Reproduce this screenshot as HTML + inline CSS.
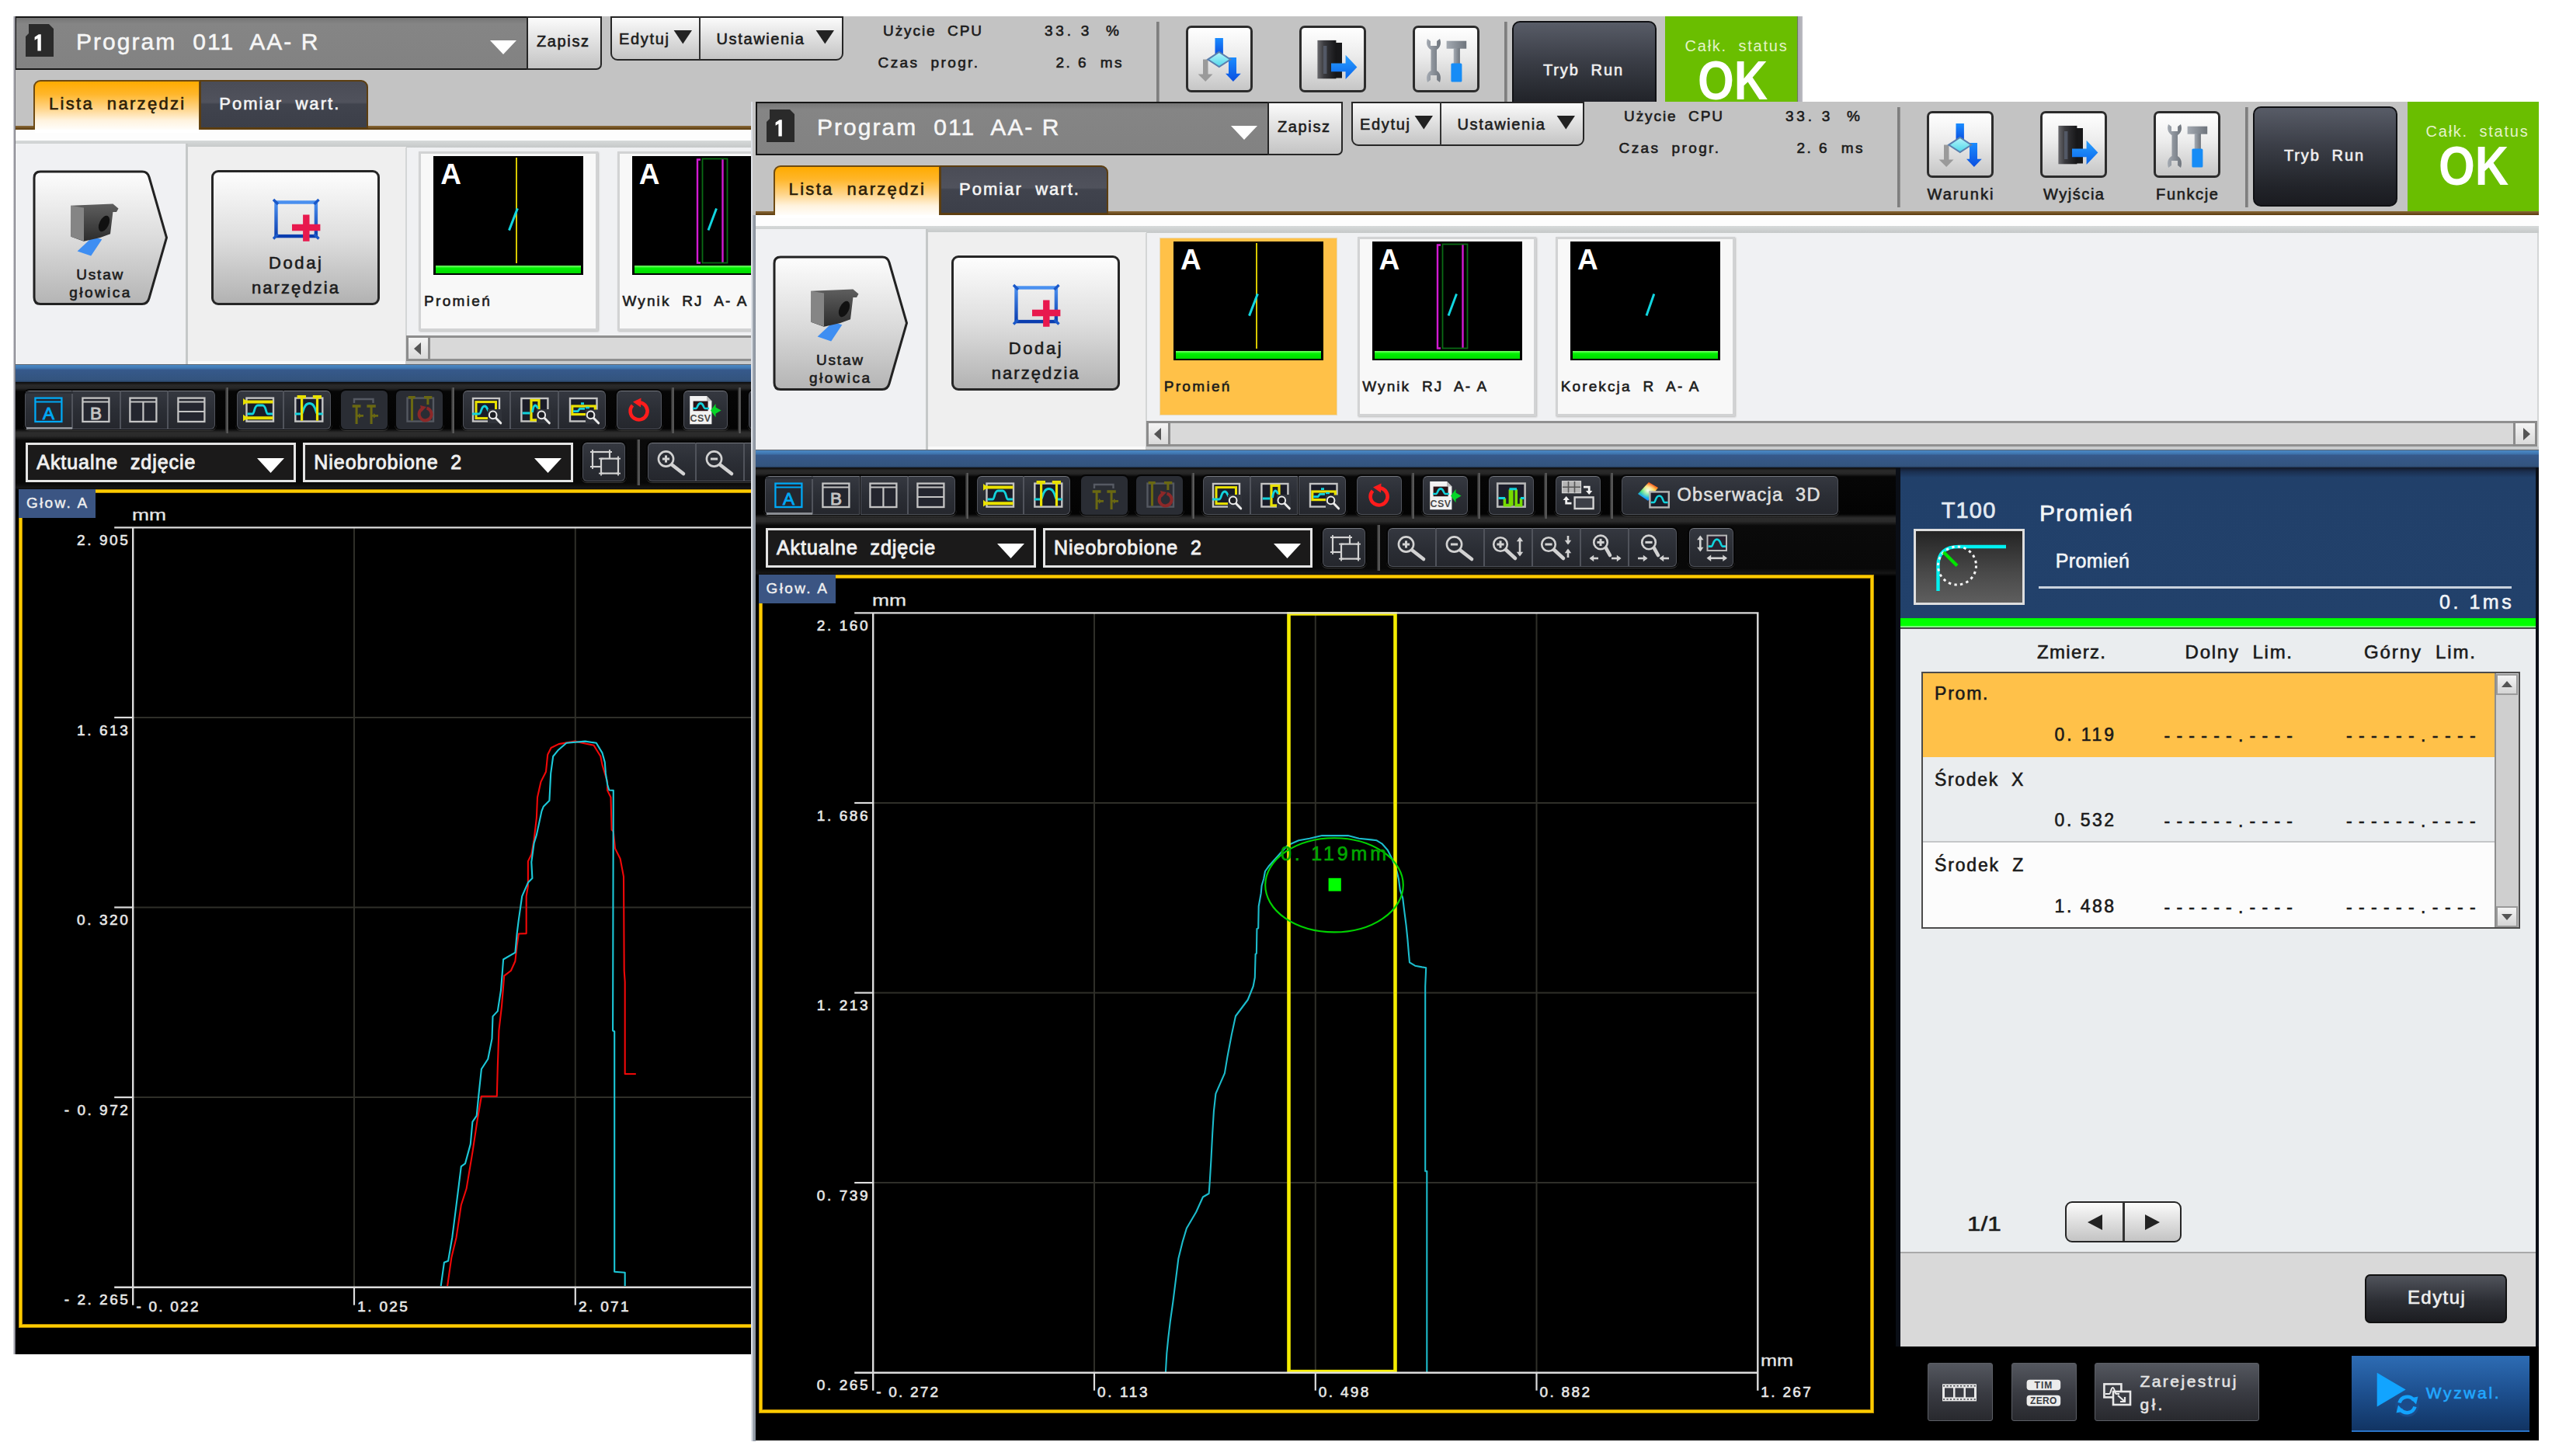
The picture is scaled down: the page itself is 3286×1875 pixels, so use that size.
<!DOCTYPE html>
<html><head><meta charset="utf-8"><title>Profile UI</title>
<style>
html,body{margin:0;padding:0;background:#fff;}
body{width:3286px;height:1875px;position:relative;overflow:hidden;font-family:"Liberation Sans",sans-serif;}
.win{position:absolute;width:2296px;height:1724px;background:#c3c3c3;overflow:hidden;}
.win div,.win svg{position:absolute;box-sizing:border-box;}
.t{white-space:pre;}
.lb{background:linear-gradient(#fbfbfb,#dcdcdc 55%,#c4c4c4);border:2.5px solid #262626;}
.db{background:linear-gradient(#353840,#2b2e35 50%,#25272d);border:1px solid #50535b;border-top:1.5px solid #74777e;border-radius:4px;}
.dbd{background:#2a2d34;border-radius:7px;}
.vd{width:4px;background:linear-gradient(90deg,#262626,#484848 45%,#707070 75%,#2c2c2c);}

</style></head><body>
<div class="win" style="left:20.3px;top:21px;height:1722.6px;"><div style="left:-1.3px;top:0;width:2296px;height:141px;"><div style="left:0.0px;top:0.0px;width:661.0px;height:68.5px;background:linear-gradient(#767676,#858585 12%,#828282);border:2.5px solid #161616;"></div><svg style="left:12.0px;top:8.0px;overflow:visible;" width="42" height="48" viewBox="0 0 42 48"><path d="M6,2 H32 L38,8 V44 H2 V18 L6,14 Z" fill="#2a2a2a"/><path d="M21.8,15.3 V36.6 H17.4 V20.6 L13.6,22.8 V18.8 L18.8,15.3 Z" fill="#fff"/></svg><div class="t" style="font-size:30px;line-height:36.0px;top:14.5px;color:#f6f6f6;letter-spacing:2.05px;left:79.0px;-webkit-text-stroke:0.5px #f6f6f6;">Program  011  AA- R</div><svg style="left:610.0px;top:30.0px;overflow:visible;" width="40" height="22" viewBox="0 0 40 22"><polygon points="2,1 36,1 19,19" fill="#fff"/></svg><div class="lb" style="left:659.0px;top:0.0px;width:96.5px;height:69.0px;border-radius:0 0 7px 0;"></div><div class="t" style="font-size:20px;line-height:24.0px;top:20.0px;color:#1c1c1c;letter-spacing:1.62px;left:672.0px;-webkit-text-stroke:0.6px #1c1c1c;">Zapisz</div><div class="lb" style="left:767.0px;top:0.0px;width:300.0px;height:57.0px;border-radius:0 0 9px 9px;"></div><div style="left:880.5px;top:0.0px;width:2.5px;height:56.0px;background:#333;"></div><div class="t" style="font-size:20px;line-height:24.0px;top:16.5px;color:#1c1c1c;letter-spacing:1.68px;left:778.0px;-webkit-text-stroke:0.6px #1c1c1c;">Edytuj</div><div class="t" style="font-size:20px;line-height:24.0px;top:16.5px;color:#1c1c1c;letter-spacing:1.63px;left:903.5px;-webkit-text-stroke:0.6px #1c1c1c;">Ustawienia</div><svg style="left:846.0px;top:16.0px;overflow:visible;" width="30" height="22" viewBox="0 0 30 22"><polygon points="2.6,2 26,2 14.3,19.4" fill="#222"/></svg><svg style="left:1029.4px;top:16.0px;overflow:visible;" width="30" height="22" viewBox="0 0 30 22"><polygon points="2.6,2 26,2 14.3,19.4" fill="#222"/></svg><div class="t" style="font-size:19px;line-height:22.8px;top:7.6px;color:#1c1c1c;letter-spacing:1.93px;left:1118.0px;-webkit-text-stroke:0.6px #1c1c1c;">Użycie  CPU</div><div class="t" style="font-size:19px;line-height:22.8px;top:7.6px;color:#1c1c1c;letter-spacing:3.75px;left:1326.0px;-webkit-text-stroke:0.6px #1c1c1c;">33. 3  %</div><div class="t" style="font-size:19px;line-height:22.8px;top:48.6px;color:#1c1c1c;letter-spacing:2.36px;left:1111.6px;-webkit-text-stroke:0.6px #1c1c1c;">Czas  progr.</div><div class="t" style="font-size:19px;line-height:22.8px;top:48.6px;color:#1c1c1c;letter-spacing:2.49px;left:1340.5px;-webkit-text-stroke:0.6px #1c1c1c;">2. 6  ms</div><div style="left:1470.0px;top:7.0px;width:4.5px;height:129.0px;background:linear-gradient(90deg,#7e7e7e 60%,#d8d8d8);"></div><div class="lb" style="left:1508.0px;top:12.0px;width:86.0px;height:86.0px;border-radius:7px;border-width:3px;border-color:#2c2c2c;background:linear-gradient(#ffffff,#ececec 45%,#c6c6c6);"></div><svg style="left:1508.0px;top:12.0px;overflow:visible;" width="86" height="86" viewBox="0 0 86 86"><defs><linearGradient id="wb" x1="0" y1="0" x2="0" y2="1"><stop offset="0" stop-color="#1a8cff"/><stop offset="1" stop-color="#0a4ee0"/></linearGradient><linearGradient id="wc" x1="0" y1="0" x2="0" y2="1"><stop offset="0" stop-color="#b6f6fb"/><stop offset="1" stop-color="#4fd6ea"/></linearGradient></defs><rect x="37.5" y="16" width="10.4" height="22" fill="url(#wb)"/><path d="M28.5,43.6 H22 V62.5 H15.6 L25.2,72 L34.5,62.5 H28.5 Z" fill="#9a9a9a"/><path d="M55,41 H65 V61.7 H70.8 L60.9,72 L51,61.7 H55 Z" fill="url(#wb)"/><polygon points="42.8,34 57.4,43.6 42.8,53 28.2,43.6" fill="url(#wc)" stroke="#5a7fae" stroke-width="2"/></svg><div class="t" style="font-size:20px;line-height:24.0px;top:106.5px;color:#1c1c1c;letter-spacing:2.07px;left:1251.0px;width:600px;text-align:center;text-indent:2.07px;-webkit-text-stroke:0.6px #1c1c1c;">Warunki</div><div class="lb" style="left:1654.0px;top:12.0px;width:86.0px;height:86.0px;border-radius:7px;border-width:3px;border-color:#2c2c2c;background:linear-gradient(#ffffff,#ececec 45%,#c6c6c6);"></div><svg style="left:1654.0px;top:12.0px;overflow:visible;" width="86" height="86" viewBox="0 0 86 86"><defs><linearGradient id="sv" x1="0" y1="0" x2="1" y2="0"><stop offset="0" stop-color="#6a6a6e"/><stop offset="0.35" stop-color="#3a3a3e"/><stop offset="1" stop-color="#161618"/></linearGradient><linearGradient id="ab" x1="0" y1="0" x2="0" y2="1"><stop offset="0" stop-color="#2aa0ff"/><stop offset="1" stop-color="#0864ec"/></linearGradient></defs><rect x="46" y="22" width="9" height="45.5" fill="#18181a"/><rect x="23.4" y="18.9" width="24" height="49.4" fill="url(#sv)"/><rect x="31" y="26" width="4.4" height="36" fill="#5a6270" opacity="0.8"/><path d="M41,48.5 H59.6 V37.8 L74.4,53.5 L59.6,69 V59.2 H41 Z" fill="url(#ab)"/></svg><div class="t" style="font-size:20px;line-height:24.0px;top:106.5px;color:#1c1c1c;letter-spacing:1.55px;left:1397.0px;width:600px;text-align:center;text-indent:1.55px;-webkit-text-stroke:0.6px #1c1c1c;">Wyjścia</div><div class="lb" style="left:1800.0px;top:12.0px;width:86.0px;height:86.0px;border-radius:7px;border-width:3px;border-color:#2c2c2c;background:linear-gradient(#ffffff,#ececec 45%,#c6c6c6);"></div><svg style="left:1800.0px;top:12.0px;overflow:visible;" width="86" height="86" viewBox="0 0 86 86"><defs><linearGradient id="mt" x1="0" y1="0" x2="1" y2="0"><stop offset="0" stop-color="#a4aab2"/><stop offset="1" stop-color="#6e747c"/></linearGradient></defs><path d="M19,17 C17,22 18,28 23.5,31 V58 C18,61 17,67 19,73 L23,70 V64 H31 V70 L35,73 C37,67 36,61 31,58 V31 C36,28 37,22 35,17 L31,20 V26 H23 V20 Z" fill="url(#mt)"/><rect x="43.6" y="19.7" width="25.6" height="10" fill="url(#mt)"/><rect x="52.7" y="29" width="8.2" height="21" fill="url(#mt)"/><rect x="49.4" y="48.5" width="14" height="24" rx="1.5" fill="#168cf6"/></svg><div class="t" style="font-size:20px;line-height:24.0px;top:106.5px;color:#1c1c1c;letter-spacing:1.66px;left:1543.0px;width:600px;text-align:center;text-indent:1.66px;-webkit-text-stroke:0.6px #1c1c1c;">Funkcje</div><div style="left:1918.0px;top:6.5px;width:4.5px;height:129.0px;background:linear-gradient(90deg,#7e7e7e 60%,#d8d8d8);"></div><div style="left:1928.0px;top:6.0px;width:186.0px;height:128.5px;background:linear-gradient(#585c67,#3a3d46 40%,#22242a 80%,#1a1b20);border:2px solid #101114;border-radius:10px;"></div><div class="t" style="font-size:20px;line-height:24.0px;top:56.5px;color:#f0f0f0;letter-spacing:1.87px;left:1968.0px;-webkit-text-stroke:0.6px #f0f0f0;">Tryb  Run</div><div style="left:2124.5px;top:0.0px;width:171.5px;height:141.5px;background:#6abe00;"></div><div class="t" style="font-size:20px;line-height:24.0px;top:25.5px;color:#e4f3c8;letter-spacing:1.75px;left:2150.6px;">Całk.  status</div><div class="t" style="font-size:70px;line-height:84.0px;top:40.5px;color:#fff;letter-spacing:0.00px;font-weight:bold;left:2166.7px;transform:scaleX(0.860);transform-origin:left center;">OK</div></div><div style="left:0.0px;top:141.0px;width:2296.0px;height:4.5px;background:linear-gradient(#8a6a3a,#5a3a0c);"></div><div style="left:22.5px;top:82.4px;width:215.5px;height:65.6px;background:linear-gradient(#ffab00,#ffb62a 25%,#ffd58a 55%,#fff3de 78%,#fff);border:2.5px solid #6e4a12;border-bottom:0;border-radius:9px 0 0 0;"></div><div style="left:237.0px;top:82.4px;width:216.5px;height:62.6px;background:linear-gradient(#4a4c56,#50525c 45%,#40434d 50%,#3c3f49);border:2.5px solid #5c3e10;border-radius:0 9px 0 0;"></div><div class="t" style="font-size:22px;line-height:26.4px;top:100.3px;color:#2c1e08;letter-spacing:2.32px;left:42.6px;-webkit-text-stroke:0.6px #2c1e08;">Lista  narzędzi</div><div class="t" style="font-size:22px;line-height:26.4px;top:100.3px;color:#f4f4f4;letter-spacing:2.03px;left:262.0px;-webkit-text-stroke:0.6px #f4f4f4;">Pomiar  wart.</div><div style="left:0.0px;top:145.5px;width:2296.0px;height:15.0px;background:#fdfdfd;"></div><div style="left:24.5px;top:145.5px;width:211.5px;height:4.0px;background:#fff;"></div><div style="left:0.0px;top:160.0px;width:2296.0px;height:10.0px;background:linear-gradient(#d6d9d9,#c4c7c7);"></div><div style="left:0.0px;top:164.0px;width:219.0px;height:284.5px;background:#f0f1f3;"></div><div style="left:218.6px;top:164.0px;width:3.6px;height:284.5px;background:#c5c8c8;"></div><div style="left:222.0px;top:168.0px;width:280.5px;height:280.0px;background:#efefef;border-bottom:4px solid #f9f9f9;"></div><div style="left:502.0px;top:169.0px;width:1794.0px;height:279.0px;background:#f0f1f3;border-left:2px solid #d4d6d6;border-right:2px solid #d4d6d6;"></div><svg style="left:22.0px;top:197.5px;overflow:visible;" width="200" height="176" viewBox="0 0 200 176"><defs><linearGradient id="lg1" x1="0" y1="0" x2="0" y2="1"><stop offset="0" stop-color="#fdfdfd"/><stop offset="0.5" stop-color="#dcdcdc"/><stop offset="1" stop-color="#b4b4b4"/></linearGradient></defs><path d="M10,2 H141 Q148,2 150,9 L172.5,87 L150,165 Q148,172.5 141,172.5 H10 Q2,172.5 2,164 V10 Q2,2 10,2 Z" fill="url(#lg1)" stroke="#222" stroke-width="3"/></svg><svg style="left:22.0px;top:197.5px;overflow:visible;" width="200" height="176" viewBox="0 0 200 176"><defs><linearGradient id="hb" x1="0" y1="0" x2="0" y2="1"><stop offset="0" stop-color="#5e5e5e"/><stop offset="1" stop-color="#2c2c2c"/></linearGradient></defs><polygon points="77.6,85.8 89.3,89.3 75.2,110.5 57.6,104.6" fill="#3e8ef2"/><polygon points="49.4,45.8 103.4,43.5 110.5,49.4 108,54 103.4,54 100,82.3 87,87 65.8,91.7 49.4,85.8" fill="url(#hb)"/><polygon points="49.4,45.8 66,48.5 66,91.5 49.4,85.8" fill="#858585"/><ellipse cx="92" cy="69" rx="6" ry="11" transform="rotate(25 92 69)" fill="#111"/></svg><div class="t" style="font-size:19px;line-height:22.8px;top:322.2px;color:#1c1c1c;letter-spacing:1.80px;left:-192.0px;width:600px;text-align:center;text-indent:1.80px;-webkit-text-stroke:0.6px #1c1c1c;">Ustaw</div><div class="t" style="font-size:19px;line-height:22.8px;top:344.6px;color:#1c1c1c;letter-spacing:2.44px;left:-192.0px;width:600px;text-align:center;text-indent:2.44px;-webkit-text-stroke:0.6px #1c1c1c;">głowica</div><div class="lb" style="left:252.0px;top:198.4px;width:216.5px;height:174.0px;border-radius:9px;border-width:3px;background:linear-gradient(#fdfdfd,#dedede 50%,#b2b2b2);"></div><svg style="left:252.0px;top:198.4px;overflow:visible;" width="216.5" height="174" viewBox="0 0 216.5 174"><defs><linearGradient id="ar" x1="0" y1="0" x2="0" y2="1"><stop offset="0" stop-color="#4a90f0"/><stop offset="1" stop-color="#0a3cae"/></linearGradient></defs><rect x="83.5" y="41.5" width="51.4" height="43.6" fill="none" stroke="url(#ar)" stroke-width="4.4"/><path d="M80,38 L86,44 M138.5,38 L132.5,44 M80,88.5 L86,82.5 M138.5,88.5 L132.5,82.5" stroke="#1a58c8" stroke-width="3.4"/><path d="M122.3,57.6 V91.7 M104,74 H140.4" stroke="#e8194e" stroke-width="8.4"/></svg><div class="t" style="font-size:22px;line-height:26.4px;top:305.1px;color:#1c1c1c;letter-spacing:2.63px;left:59.7px;width:600px;text-align:center;text-indent:2.63px;-webkit-text-stroke:0.6px #1c1c1c;">Dodaj</div><div class="t" style="font-size:22px;line-height:26.4px;top:336.8px;color:#1c1c1c;letter-spacing:2.08px;left:59.7px;width:600px;text-align:center;text-indent:2.08px;-webkit-text-stroke:0.6px #1c1c1c;">narzędzia</div><div style="left:519.0px;top:174.0px;width:230.5px;height:230.5px;background:#f8f8f8;border:3px solid #d2d3d4;box-shadow:1px 1px 2px #bbb;"></div><div style="left:538.0px;top:179.6px;width:193.0px;height:153.0px;background:#000;"></div><div style="left:541.0px;top:320.6px;width:187.0px;height:10.5px;background:linear-gradient(#7dff6e,#00f000 35%,#00d800);"></div><svg style="left:538.0px;top:179.6px;overflow:visible;" width="193" height="153" viewBox="0 0 193 153"><line x1="107" y1="2" x2="107" y2="138" stroke="#d8c800" stroke-width="2"/><line x1="97.5" y1="95.6" x2="108.4" y2="67.4" stroke="#12d6e0" stroke-width="3"/></svg><div class="t" style="font-size:37px;line-height:44.4px;top:182.0px;color:#fff;letter-spacing:0.00px;font-weight:bold;left:547.0px;">A</div><div class="t" style="font-size:19px;line-height:22.8px;top:355.6px;color:#1c1c1c;letter-spacing:2.33px;left:525.7px;-webkit-text-stroke:0.6px #1c1c1c;">Promień</div><div style="left:774.5px;top:174.0px;width:230.5px;height:230.5px;background:#f8f8f8;border:3px solid #d2d3d4;box-shadow:1px 1px 2px #bbb;"></div><div style="left:793.5px;top:179.6px;width:193.0px;height:153.0px;background:#000;"></div><div style="left:796.5px;top:320.6px;width:187.0px;height:10.5px;background:linear-gradient(#7dff6e,#00f000 35%,#00d800);"></div><svg style="left:793.5px;top:179.6px;overflow:visible;" width="193" height="153" viewBox="0 0 193 153"><path d="M88,4.5 H84 V137.5 H88 M116.5,4 V138" fill="none" stroke="#d21ad2" stroke-width="2.4"/><rect x="90.5" y="3.5" width="32" height="134" fill="none" stroke="#0a6a14" stroke-width="1.8"/><line x1="98" y1="95.6" x2="108.5" y2="67.4" stroke="#12d6e0" stroke-width="3"/></svg><div class="t" style="font-size:37px;line-height:44.4px;top:182.0px;color:#fff;letter-spacing:0.00px;font-weight:bold;left:802.5px;">A</div><div class="t" style="font-size:19px;line-height:22.8px;top:355.6px;color:#1c1c1c;letter-spacing:2.09px;left:781.2px;-webkit-text-stroke:0.6px #1c1c1c;">Wynik  RJ  A- A</div><div style="left:1030.0px;top:174.0px;width:230.5px;height:230.5px;background:#f8f8f8;border:3px solid #d2d3d4;box-shadow:1px 1px 2px #bbb;"></div><div style="left:1049.0px;top:179.6px;width:193.0px;height:153.0px;background:#000;"></div><div style="left:1052.0px;top:320.6px;width:187.0px;height:10.5px;background:linear-gradient(#7dff6e,#00f000 35%,#00d800);"></div><svg style="left:1049.0px;top:179.6px;overflow:visible;" width="193" height="153" viewBox="0 0 193 153"><line x1="98" y1="95.6" x2="107.8" y2="67.4" stroke="#12d6e0" stroke-width="3"/></svg><div class="t" style="font-size:37px;line-height:44.4px;top:182.0px;color:#fff;letter-spacing:0.00px;font-weight:bold;left:1058.0px;">A</div><div class="t" style="font-size:19px;line-height:22.8px;top:355.6px;color:#1c1c1c;letter-spacing:2.13px;left:1036.7px;-webkit-text-stroke:0.6px #1c1c1c;">Korekcja  R  A- A</div><div style="left:503.0px;top:411.2px;width:1791.0px;height:32.5px;background:#d9d9d9;border:3px solid #909090;"></div><div style="left:503.0px;top:411.2px;width:31.0px;height:32.5px;background:linear-gradient(#f4f4f4,#dadada);border:3px solid #8c8c8c;"></div><div style="left:2263.0px;top:411.2px;width:31.0px;height:32.5px;background:linear-gradient(#f4f4f4,#dadada);border:3px solid #8c8c8c;"></div><svg style="left:503.0px;top:411.6px;overflow:visible;" width="31" height="32" viewBox="0 0 31 32"><polygon points="19,8 19,24 10,16" fill="#555"/></svg><svg style="left:2263.5px;top:411.6px;overflow:visible;" width="31" height="32" viewBox="0 0 31 32"><polygon points="12,8 12,24 21,16" fill="#555"/></svg><div style="left:502.0px;top:443.7px;width:1794.0px;height:4.5px;background:#c9cbcc;"></div><div style="left:0.0px;top:447.6px;width:2296.0px;height:24.0px;background:linear-gradient(#59636f 0 1px,#4c8ac6 1px,#4078b2 5px,#36598b 7.5px,#33547e 21px,#1c2c44);"></div><div style="left:0.0px;top:471.0px;width:1468.0px;height:142.0px;background:#000;"></div><div style="left:0.0px;top:471.0px;width:1468.0px;height:70.0px;background:linear-gradient(#0a0a0a,#2a2a2a 4px,#262626 8px,#060606 12px,#030303 60px,#2c2c2c 65px,#2a2a2a);"></div><div style="left:0.0px;top:541.0px;width:1468.0px;height:72.0px;background:linear-gradient(#262626,#0a0a0a 5px,#080808 60px,#161616 66px,#000 70px);"></div><div style="left:10.0px;top:480.0px;width:249.0px;height:54.0px;background:#050505;border-radius:8px;border-bottom:1px solid #3a3a3a;"></div><div class="db" style="left:12.0px;top:482.0px;width:61.2px;height:50.0px;border-radius:6px 0 0 6px;"></div><svg style="left:20.6px;top:487.0px;overflow:visible;" width="44" height="40" viewBox="0 0 44 40"><rect x="4.4" y="4.6" width="34" height="30.4" fill="#24262f" stroke="#00a8f4" stroke-width="2.3"/><line x1="4.4" y1="9.6" x2="38.4" y2="9.6" stroke="#00a8f4" stroke-width="2"/><text x="21.5" y="31.6" font-family="Liberation Sans" font-size="22.5" text-anchor="middle" fill="#00a8f4" stroke="#00a8f4" stroke-width="0.9">A</text></svg><div class="db" style="left:73.2px;top:482.0px;width:61.2px;height:50.0px;border-radius:0;"></div><svg style="left:81.9px;top:487.0px;overflow:visible;" width="44" height="40" viewBox="0 0 44 40"><rect x="4.4" y="4.6" width="34" height="30.4" fill="#24262f" stroke="#c4c4c4" stroke-width="2.3"/><line x1="4.4" y1="9.6" x2="38.4" y2="9.6" stroke="#c4c4c4" stroke-width="2"/><text x="21.5" y="31.6" font-family="Liberation Sans" font-size="22.5" text-anchor="middle" fill="#c4c4c4" stroke="#c4c4c4" stroke-width="0.9">B</text></svg><div class="db" style="left:134.5px;top:482.0px;width:61.2px;height:50.0px;border-radius:0;"></div><svg style="left:143.1px;top:487.0px;overflow:visible;" width="44" height="40" viewBox="0 0 44 40"><rect x="4.4" y="4.6" width="34" height="30.4" fill="#24262f" stroke="#c4c4c4" stroke-width="2.3"/><line x1="4.4" y1="9.6" x2="38.4" y2="9.6" stroke="#c4c4c4" stroke-width="2"/><line x1="21.4" y1="9.6" x2="21.4" y2="35" stroke="#c4c4c4" stroke-width="2.2"/></svg><div class="db" style="left:195.8px;top:482.0px;width:61.2px;height:50.0px;border-radius:0 6px 6px 0;"></div><svg style="left:204.4px;top:487.0px;overflow:visible;" width="44" height="40" viewBox="0 0 44 40"><rect x="4.4" y="4.6" width="34" height="30.4" fill="#24262f" stroke="#c4c4c4" stroke-width="2.3"/><line x1="4.4" y1="9.6" x2="38.4" y2="9.6" stroke="#c4c4c4" stroke-width="2"/><line x1="4.4" y1="22" x2="38.4" y2="22" stroke="#c4c4c4" stroke-width="2.2"/></svg><div style="left:14.0px;top:529.0px;width:59.0px;height:2.5px;background:#8a8d93;"></div><div style="left:12.5px;top:482.5px;width:61.0px;height:3.0px;background:#2c2f36;"></div><div class="vd" style="left:270.0px;top:478.0px;width:4.0px;height:59.0px;"></div><div style="left:282.8px;top:480.0px;width:124.7px;height:54.0px;background:#050505;border-radius:8px;border-bottom:1px solid #3a3a3a;"></div><div class="db" style="left:284.8px;top:482.0px;width:60.3px;height:50.0px;border-radius:6px 0 0 6px;"></div><svg style="left:293.0px;top:487.0px;overflow:visible;" width="44" height="40" viewBox="0 0 44 40"><rect x="4.5" y="4.6" width="34.5" height="30" fill="#1a1c28" stroke="#c4c4c4" stroke-width="2.4"/><path d="M2,9.4 H38.5 M2,30.2 H38.5" stroke="#e9e100" stroke-width="4" fill="none"/><polygon points="0,5 6,9.4 0,13.8" fill="#e9e100"/><polygon points="0,25.8 6,30.2 0,34.6" fill="#e9e100"/><path d="M5.5,25 H12 C15,25 14,14 19,14 H25 C30,14 29,25 32,25 H38" stroke="#12d2dc" stroke-width="2.8" fill="none"/></svg><div class="db" style="left:345.1px;top:482.0px;width:60.3px;height:50.0px;border-radius:0 6px 6px 0;"></div><svg style="left:353.3px;top:487.0px;overflow:visible;" width="44" height="40" viewBox="0 0 44 40"><rect x="6.3" y="4.6" width="35" height="30" fill="#1a1c28" stroke="#c4c4c4" stroke-width="2.4"/><path d="M6,25 H14 C17,25 16,11.5 24.5,11.5 C33,11.5 32,25 35,25 H41.5" stroke="#12d2dc" stroke-width="2.8" fill="none"/><path d="M14.6,2 V33.8 M34.5,2 V33.8" stroke="#e9e100" stroke-width="3.2" fill="none"/><path d="M8.6,3 H20 M28.8,3 H40" stroke="#e9e100" stroke-width="4" fill="none"/></svg><div style="left:417.0px;top:480.0px;width:63.5px;height:54.0px;background:#050505;border-radius:8px;border-bottom:1px solid #3a3a3a;"></div><div class="dbd" style="left:419.0px;top:482.0px;width:59.5px;height:50.0px;border-radius:6px;"></div><svg style="left:426.8px;top:487.0px;overflow:visible;" width="44" height="40" viewBox="0 0 44 40"><path d="M9,11 V6 H33.5 V11" stroke="#565a63" stroke-width="2.4" fill="none"/><path d="M6.7,15 H17.5 M25.4,15 H36.8" stroke="#6a6812" stroke-width="3.4"/><path d="M12.1,15 V38 M31.1,15 V38" stroke="#6a6812" stroke-width="3"/><path d="M13,27.4 H21 M32,27.4 H40" stroke="#6a6812" stroke-width="2.6"/><polygon points="15,24 19,27.4 15,30.8" fill="#6a6812"/><polygon points="34,24 38,27.4 34,30.8" fill="#6a6812"/></svg><div style="left:488.0px;top:480.0px;width:63.7px;height:54.0px;background:#050505;border-radius:8px;border-bottom:1px solid #3a3a3a;"></div><div class="dbd" style="left:490.0px;top:482.0px;width:59.7px;height:50.0px;border-radius:6px;"></div><svg style="left:497.9px;top:487.0px;overflow:visible;" width="44" height="40" viewBox="0 0 44 40"><rect x="6.5" y="4.6" width="33.5" height="30" fill="none" stroke="#545861" stroke-width="2.4"/><path d="M7.6,3.6 H16.7 M28,3.6 H38.3" stroke="#6a6812" stroke-width="3.4"/><path d="M12.5,3.6 V33.6 M32.9,3.6 V13" stroke="#6a6812" stroke-width="3"/><path d="M25.5,18.5 A8,8 0 1 0 31.5,17.6" stroke="#8c2828" stroke-width="4" fill="none"/><polygon points="23,14 31,16 25,22" fill="#8c2828"/></svg><div class="vd" style="left:561.0px;top:478.0px;width:4.0px;height:59.0px;"></div><div style="left:574.0px;top:480.0px;width:187.7px;height:54.0px;background:#050505;border-radius:8px;border-bottom:1px solid #3a3a3a;"></div><div class="db" style="left:576.0px;top:482.0px;width:61.2px;height:50.0px;border-radius:6px 0 0 6px;"></div><svg style="left:584.6px;top:487.0px;overflow:visible;" width="44" height="40" viewBox="0 0 44 40"><rect x="4" y="5" width="34" height="29.5" fill="#1a1c28" stroke="#c4c4c4" stroke-width="2.4"/><rect x="8" y="9.6" width="25.5" height="21" fill="none" stroke="#e9e100" stroke-width="3"/><path d="M3,25 H12 C15,25 14,15 19,15 C23,15 22,21 25,22" stroke="#12d2dc" stroke-width="2.8" fill="none"/><rect x="23" y="19" width="18" height="18" fill="#30333a"/><line x1="32.9" y1="29.799999999999997" x2="39.7" y2="36.8" stroke="#ececec" stroke-width="3" stroke-linecap="round"/><circle cx="29.7" cy="26.4" r="4.8" fill="#1c1e24" stroke="#ececec" stroke-width="2"/></svg><div class="db" style="left:637.2px;top:482.0px;width:61.2px;height:50.0px;border-radius:0;"></div><svg style="left:645.9px;top:487.0px;overflow:visible;" width="44" height="40" viewBox="0 0 44 40"><rect x="5.4" y="5" width="34" height="29.5" fill="#1a1c28" stroke="#c4c4c4" stroke-width="2.4"/><rect x="18" y="7.4" width="10" height="25.5" fill="none" stroke="#e9e100" stroke-width="3.2"/><path d="M6.7,24 H16.5 M19.5,23 C21,12 24,12 26.5,18" stroke="#12d2dc" stroke-width="2.8" fill="none"/><rect x="25" y="19" width="18" height="18" fill="#30333a"/><line x1="34.5" y1="29.799999999999997" x2="41.3" y2="36.8" stroke="#ececec" stroke-width="3" stroke-linecap="round"/><circle cx="31.3" cy="26.4" r="4.8" fill="#1c1e24" stroke="#ececec" stroke-width="2"/></svg><div class="db" style="left:698.5px;top:482.0px;width:61.2px;height:50.0px;border-radius:0 6px 6px 0;"></div><svg style="left:707.1px;top:487.0px;overflow:visible;" width="44" height="40" viewBox="0 0 44 40"><rect x="7" y="5" width="34.5" height="29.5" fill="#1a1c28" stroke="#c4c4c4" stroke-width="2.4"/><rect x="9.8" y="15" width="29.5" height="10.6" fill="none" stroke="#e9e100" stroke-width="3.2"/><path d="M11,21.6 H17 L19.5,18.4 H26 M21,11.6 H25 M27,17 H32" stroke="#12d2dc" stroke-width="2.6" fill="none"/><rect x="27" y="19.5" width="18" height="18" fill="#30333a"/><line x1="36.800000000000004" y1="29.799999999999997" x2="43.6" y2="36.8" stroke="#ececec" stroke-width="3" stroke-linecap="round"/><circle cx="33.6" cy="26.4" r="4.8" fill="#1c1e24" stroke="#ececec" stroke-width="2"/></svg><div style="left:772.0px;top:480.0px;width:62.0px;height:54.0px;background:#050505;border-radius:8px;border-bottom:1px solid #3a3a3a;"></div><div class="db" style="left:774.0px;top:482.0px;width:58.0px;height:50.0px;border-radius:6px;"></div><svg style="left:781.0px;top:487.0px;overflow:visible;" width="44" height="40" viewBox="0 0 44 40"><path d="M13.5,14 A11,11 0 1 0 23.5,10.6" stroke="#ff1c1c" stroke-width="4.6" fill="none"/><polygon points="14,9.5 24.5,4.5 24,16.5" fill="#ff1c1c"/></svg><div class="vd" style="left:843.5px;top:478.0px;width:4.0px;height:59.0px;"></div><div style="left:857.3px;top:480.0px;width:61.4px;height:54.0px;background:#050505;border-radius:8px;border-bottom:1px solid #3a3a3a;"></div><div class="db" style="left:859.3px;top:482.0px;width:57.4px;height:50.0px;border-radius:6px;"></div><svg style="left:866.0px;top:487.0px;overflow:visible;" width="44" height="40" viewBox="0 0 44 40"><path d="M2.2,2 H24 L30.4,8.6 V38.2 H2.2 Z" fill="#f2f2f2"/><path d="M24,2 V8.6 H30.4 Z" fill="#bdbdbd"/><rect x="6.6" y="8.6" width="19" height="12.6" fill="#2a1216"/><path d="M6,18 H10.5 C12,18 12,11.4 16,11.4 C20,11.4 20,18 21.5,18 H27" stroke="#12d2dc" stroke-width="2.6" fill="none"/><text x="16" y="35" font-family="Liberation Sans" font-weight="bold" font-size="12.5" text-anchor="middle" fill="#4a4a4a" letter-spacing="0.5">CSV</text><polygon points="29,20.6 35.5,12 35.5,16.5 42.6,20.6 35.5,24.7 35.5,29.2" fill="#06d628"/></svg><div class="vd" style="left:929.4px;top:478.0px;width:4.0px;height:59.0px;"></div><div style="left:942.0px;top:480.0px;width:62.0px;height:54.0px;background:#050505;border-radius:8px;border-bottom:1px solid #3a3a3a;"></div><div class="db" style="left:944.0px;top:482.0px;width:58.0px;height:50.0px;border-radius:6px;"></div><svg style="left:951.0px;top:487.0px;overflow:visible;" width="44" height="40" viewBox="0 0 44 40"><rect x="4.2" y="4.6" width="35.4" height="30" fill="#1b1d2a" stroke="#b8b8b8" stroke-width="2.6"/><path d="M13.4,23.6 V32.6 H20.4 V12.2 M28.2,12.2 V32.6 H34.6 V23.6" stroke="#76dc00" stroke-width="3.6" fill="none"/><rect x="22" y="13" width="2.6" height="20" fill="#76dc00"/><path d="M5.4,23.4 H14 M19.4,11.8 H29 M34,23.4 H38.8" stroke="#12d2dc" stroke-width="3" fill="none"/></svg><div class="vd" style="left:1015.0px;top:478.0px;width:4.0px;height:59.0px;"></div><div style="left:1027.5px;top:480.0px;width:62.0px;height:54.0px;background:#050505;border-radius:8px;border-bottom:1px solid #3a3a3a;"></div><div class="db" style="left:1029.5px;top:482.0px;width:58.0px;height:50.0px;border-radius:6px;"></div><svg style="left:1036.5px;top:487.0px;overflow:visible;" width="44" height="40" viewBox="0 0 44 40"><rect x="1.6" y="1.8" width="23.8" height="14.8" fill="#b4b4b4" stroke="#d0d0d0" stroke-width="1.4"/><path d="M9.5,2 V16.4 M17.5,2 V16.4 M2,9.2 H25" stroke="#555" stroke-width="1.6"/><path d="M29,9.2 H36.2 V15" stroke="#f0f0f0" stroke-width="2.8" fill="none"/><polygon points="32,14 40.4,14 36.2,19" fill="#f0f0f0"/><path d="M13.5,30.2 H6.7 V25" stroke="#f0f0f0" stroke-width="2.8" fill="none"/><polygon points="2.5,26 10.9,26 6.7,21" fill="#f0f0f0"/><rect x="17.6" y="22.4" width="24" height="14.6" fill="#3c3f47" stroke="#d4d4d4" stroke-width="2.4"/></svg><div class="vd" style="left:1099.6px;top:478.0px;width:4.0px;height:59.0px;"></div><div style="left:1113.0px;top:480.0px;width:283.0px;height:54.0px;background:#050505;border-radius:8px;border-bottom:1px solid #3a3a3a;"></div><div class="db" style="left:1115.0px;top:482.0px;width:279.0px;height:50.0px;border-radius:6px;"></div><svg style="left:1136.0px;top:487.0px;overflow:visible;" width="44" height="40" viewBox="0 0 44 40"><defs><linearGradient id="rb" x1="0.7" y1="0" x2="0.2" y2="1"><stop offset="0" stop-color="#ff2a10"/><stop offset="0.3" stop-color="#ffd83a"/><stop offset="0.55" stop-color="#38e04a"/><stop offset="0.8" stop-color="#18a8ff"/><stop offset="1" stop-color="#1038e0"/></linearGradient><radialGradient id="rw" cx="0.5" cy="0.45" r="0.4"><stop offset="0" stop-color="#fff" stop-opacity="0.95"/><stop offset="1" stop-color="#fff" stop-opacity="0"/></radialGradient></defs><polygon points="14,3 26,10 13,27 0,18" fill="url(#rb)"/><polygon points="14,3 26,10 13,27 0,18" fill="url(#rw)"/><rect x="15.4" y="15.4" width="24.4" height="20" fill="#1b1d2a" stroke="#b4b4b4" stroke-width="2.4"/><path d="M16.6,29 H20.5 C23,29 22.5,20.5 27.5,20.5 C32.5,20.5 32,29 34.5,29 H38.6" stroke="#12d2dc" stroke-width="2.6" fill="none"/></svg><div class="t" style="font-size:23.5px;line-height:28.2px;top:491.6px;color:#dedede;letter-spacing:1.29px;left:1186.5px;-webkit-text-stroke:0.6px #dedede;">Obserwacja  3D</div><div style="left:13.0px;top:548.5px;width:348.0px;height:51.0px;background:#1b1a1a;border:3px solid #e4e4e4;"></div><div class="t" style="font-size:25px;line-height:30.0px;top:559.0px;color:#f0f0f0;letter-spacing:0.94px;left:27.0px;-webkit-text-stroke:0.9px #f0f0f0;">Aktualne  zdjęcie</div><svg style="left:311.0px;top:568.5px;overflow:visible;" width="36" height="20" viewBox="0 0 36 20"><polygon points="0,0 35,0 17.5,19" fill="#fff"/></svg><div style="left:370.0px;top:548.5px;width:347.4px;height:51.0px;background:#1b1a1a;border:3px solid #e4e4e4;"></div><div class="t" style="font-size:25px;line-height:30.0px;top:559.0px;color:#f0f0f0;letter-spacing:0.96px;left:384.0px;-webkit-text-stroke:0.9px #f0f0f0;">Nieobrobione  2</div><svg style="left:667.4px;top:568.5px;overflow:visible;" width="36" height="20" viewBox="0 0 36 20"><polygon points="0,0 35,0 17.5,19" fill="#fff"/></svg><div style="left:728.0px;top:547.0px;width:59.0px;height:54.0px;background:#050505;border-radius:8px;border-bottom:1px solid #3a3a3a;"></div><div class="db" style="left:730.0px;top:549.0px;width:55.0px;height:50.0px;border-radius:6px;"></div><svg style="left:735.5px;top:554.0px;overflow:visible;" width="44" height="40" viewBox="0 0 44 40"><rect x="7" y="7" width="22" height="19" fill="none" stroke="#d2d2d2" stroke-width="2.2"/><rect x="18" y="15.6" width="22" height="19" fill="#30333a" stroke="#d2d2d2" stroke-width="2.2"/><path d="M4,7 H10 M7,4 V10 M26,7 H32 M29,4 V10 M4,26 H10 M7,23 V29 M15,15.6 H21 M37,15.6 H43 M40,12.6 V18.6 M15,34.6 H21 M18,31.6 V37.6 M37,34.6 H43 M40,31.6 V37.6" stroke="#d2d2d2" stroke-width="1.8"/></svg><div class="vd" style="left:799.6px;top:545.0px;width:4.0px;height:59.0px;"></div><div style="left:812.0px;top:547.0px;width:376.0px;height:54.0px;background:#050505;border-radius:8px;border-bottom:1px solid #3a3a3a;"></div><div class="db" style="left:814.0px;top:549.0px;width:62.0px;height:50.0px;border-radius:6px 0 0 6px;"></div><svg style="left:823.0px;top:554.0px;overflow:visible;" width="44" height="40" viewBox="0 0 44 40"><line x1="21.2" y1="22.7" x2="37" y2="35" stroke="#d2d2d2" stroke-width="4.6" stroke-linecap="round"/><circle cx="14.5" cy="16" r="9.6" fill="#2b2e35" stroke="#d2d2d2" stroke-width="2.6"/><line x1="9.9" y1="16" x2="19.1" y2="16" stroke="#d2d2d2" stroke-width="3"/><line x1="14.5" y1="11.4" x2="14.5" y2="20.6" stroke="#d2d2d2" stroke-width="3"/></svg><div class="db" style="left:876.0px;top:549.0px;width:62.0px;height:50.0px;border-radius:0;"></div><svg style="left:885.0px;top:554.0px;overflow:visible;" width="44" height="40" viewBox="0 0 44 40"><line x1="21.2" y1="22.7" x2="37" y2="35" stroke="#d2d2d2" stroke-width="4.6" stroke-linecap="round"/><circle cx="14.5" cy="16" r="9.6" fill="#2b2e35" stroke="#d2d2d2" stroke-width="2.6"/><line x1="9.9" y1="16" x2="19.1" y2="16" stroke="#d2d2d2" stroke-width="3"/></svg><div class="db" style="left:938.0px;top:549.0px;width:62.0px;height:50.0px;border-radius:0;"></div><svg style="left:947.0px;top:554.0px;overflow:visible;" width="44" height="40" viewBox="0 0 44 40"><line x1="18.2" y1="22.2" x2="31" y2="34" stroke="#d2d2d2" stroke-width="4.6" stroke-linecap="round"/><circle cx="12" cy="16" r="8.8" fill="#2b2e35" stroke="#d2d2d2" stroke-width="2.6"/><line x1="7.4" y1="16" x2="16.6" y2="16" stroke="#d2d2d2" stroke-width="3"/><line x1="12" y1="11.4" x2="12" y2="20.6" stroke="#d2d2d2" stroke-width="3"/><line x1="37" y1="8" x2="37" y2="30" stroke="#d2d2d2" stroke-width="2.6"/><polygon points="37,31.5 32.8,25.8 41.2,25.8" fill="#d2d2d2"/><polygon points="37,6.5 32.8,12.2 41.2,12.2" fill="#d2d2d2"/></svg><div class="db" style="left:1000.0px;top:549.0px;width:62.0px;height:50.0px;border-radius:0;"></div><svg style="left:1009.0px;top:554.0px;overflow:visible;" width="44" height="40" viewBox="0 0 44 40"><line x1="18.2" y1="22.2" x2="31" y2="34" stroke="#d2d2d2" stroke-width="4.6" stroke-linecap="round"/><circle cx="12" cy="16" r="8.8" fill="#2b2e35" stroke="#d2d2d2" stroke-width="2.6"/><line x1="7.4" y1="16" x2="16.6" y2="16" stroke="#d2d2d2" stroke-width="3"/><line x1="37" y1="5" x2="37" y2="15" stroke="#d2d2d2" stroke-width="2.6"/><polygon points="37,16.5 32.8,10.8 41.2,10.8" fill="#d2d2d2"/><line x1="37" y1="33" x2="37" y2="23" stroke="#d2d2d2" stroke-width="2.6"/><polygon points="37,21.5 32.8,27.2 41.2,27.2" fill="#d2d2d2"/></svg><div class="db" style="left:1062.0px;top:549.0px;width:62.0px;height:50.0px;border-radius:0;"></div><svg style="left:1071.0px;top:554.0px;overflow:visible;" width="44" height="40" viewBox="0 0 44 40"><line x1="23.2" y1="19.6" x2="29" y2="30" stroke="#d2d2d2" stroke-width="4.6" stroke-linecap="round"/><circle cx="17" cy="13.4" r="8.8" fill="#2b2e35" stroke="#d2d2d2" stroke-width="2.6"/><line x1="12.4" y1="13.4" x2="21.6" y2="13.4" stroke="#d2d2d2" stroke-width="3"/><line x1="17" y1="8.8" x2="17" y2="18.0" stroke="#d2d2d2" stroke-width="3"/><line x1="14" y1="34" x2="4" y2="34" stroke="#d2d2d2" stroke-width="2.6"/><polygon points="2.5,34 8.2,29.8 8.2,38.2" fill="#d2d2d2"/><line x1="31" y1="34" x2="42" y2="34" stroke="#d2d2d2" stroke-width="2.6"/><polygon points="43.5,34 37.8,29.8 37.8,38.2" fill="#d2d2d2"/></svg><div class="db" style="left:1124.0px;top:549.0px;width:62.0px;height:50.0px;border-radius:0 6px 6px 0;"></div><svg style="left:1133.0px;top:554.0px;overflow:visible;" width="44" height="40" viewBox="0 0 44 40"><line x1="23.2" y1="19.6" x2="29" y2="30" stroke="#d2d2d2" stroke-width="4.6" stroke-linecap="round"/><circle cx="17" cy="13.4" r="8.8" fill="#2b2e35" stroke="#d2d2d2" stroke-width="2.6"/><line x1="12.4" y1="13.4" x2="21.6" y2="13.4" stroke="#d2d2d2" stroke-width="3"/><line x1="3" y1="34" x2="14" y2="34" stroke="#d2d2d2" stroke-width="2.6"/><polygon points="15.5,34 9.8,29.8 9.8,38.2" fill="#d2d2d2"/><line x1="43" y1="34" x2="32" y2="34" stroke="#d2d2d2" stroke-width="2.6"/><polygon points="30.5,34 36.2,29.8 36.2,38.2" fill="#d2d2d2"/></svg><div style="left:1200.0px;top:547.0px;width:61.0px;height:54.0px;background:#050505;border-radius:8px;border-bottom:1px solid #3a3a3a;"></div><div class="db" style="left:1202.0px;top:549.0px;width:57.0px;height:50.0px;border-radius:6px;"></div><svg style="left:1208.5px;top:554.0px;overflow:visible;" width="44" height="40" viewBox="0 0 44 40"><line x1="7.3" y1="6" x2="7.3" y2="24" stroke="#d2d2d2" stroke-width="2.6"/><polygon points="7.3,25.5 3.0999999999999996,19.8 11.5,19.8" fill="#d2d2d2"/><polygon points="7.3,4.5 3.0999999999999996,10.2 11.5,10.2" fill="#d2d2d2"/><rect x="16.5" y="4.6" width="24.5" height="19.4" fill="#2a2230" stroke="#b8b8b8" stroke-width="2"/><path d="M17.6,18.6 H21.5 C24,18.6 23.5,9.6 28.7,9.6 C34,9.6 33.5,18.6 36,18.6 H40" stroke="#12d2dc" stroke-width="2.6" fill="none"/><line x1="17" y1="33.8" x2="40.5" y2="33.8" stroke="#d2d2d2" stroke-width="2.6"/><polygon points="42.0,33.8 36.3,29.599999999999998 36.3,38.0" fill="#d2d2d2"/><polygon points="15.5,33.8 21.2,29.599999999999998 21.2,38.0" fill="#d2d2d2"/></svg><div style="left:0.0px;top:613.0px;width:1468.0px;height:1111.0px;background:#000;"></div><div style="left:4.5px;top:609.8px;width:1434.0px;height:1078.6px;border:3px solid #ffcc00;box-shadow:0 0 0 1px #b98c00,inset 0 0 0 1px #b98c00;"></div><div style="left:3.5px;top:609.0px;width:99.0px;height:36.5px;background:#3b5583;"></div><div class="t" style="font-size:19px;line-height:22.8px;top:616.1px;color:#f0f0f0;letter-spacing:2.33px;left:13.6px;-webkit-text-stroke:0.4px #f0f0f0;">Głow. A</div><svg style="left:0.0px;top:0.0px;overflow:visible;" width="1468" height="1724" viewBox="0 0 1468 1724"><line x1="436.0" y1="658.4" x2="436.0" y2="1636.7" stroke="#2f2f29" stroke-width="2"/><line x1="151.2" y1="903.0" x2="1290.3" y2="903.0" stroke="#2f2f29" stroke-width="2"/><line x1="720.8" y1="658.4" x2="720.8" y2="1636.7" stroke="#2f2f29" stroke-width="2"/><line x1="151.2" y1="1147.5" x2="1290.3" y2="1147.5" stroke="#2f2f29" stroke-width="2"/><line x1="1005.5" y1="658.4" x2="1005.5" y2="1636.7" stroke="#2f2f29" stroke-width="2"/><line x1="151.2" y1="1392.1" x2="1290.3" y2="1392.1" stroke="#2f2f29" stroke-width="2"/><polyline points="556.1,1635.1 561.3,1598.5 567.6,1572.4 573.8,1530.7 580.6,1509.8 588.4,1462.8 594.7,1421.0 599.9,1390.8 619.8,1390.8 620.8,1353.2 622.4,1306.2 626.0,1274.9 629.2,1235.7 637.9,1229.0 643.4,1216.7 645.6,1196.9 647.8,1181.5 657.7,1181.1 657.7,1133.2 659.9,1120.0 659.9,1088.1 664.3,1079.3 667.6,1060.6 670.9,1032.1 672.0,1005.7 676.4,985.9 683.0,972.7 685.2,950.8 689.6,942.0 699.5,937.1 720.4,933.6 733.5,936.5 744.5,938.7 753.3,953.0 755.5,963.9 762.1,985.9 762.1,996.9 766.5,1005.7 767.6,1047.5 769.8,1049.7 772.0,1071.6 778.6,1084.8 783.0,1107.9 783.7,1229.0 784.7,1243.5 784.7,1362.0 798.8,1362.0" fill="none" stroke="#f00808" stroke-width="2.1" stroke-linejoin="round"/><polyline points="547.7,1635.1 551.9,1604.8 557.1,1602.7 562.3,1572.4 567.6,1530.7 573.8,1481.1 579.0,1477.4 585.8,1452.4 588.4,1423.6 593.7,1415.8 596.3,1389.7 599.9,1355.8 608.3,1342.7 613.5,1316.6 614.5,1287.9 620.8,1281.1 625.0,1254.0 627.0,1229.0 628.1,1214.5 643.4,1205.7 645.6,1181.5 647.8,1163.9 652.2,1133.2 659.9,1115.6 665.4,1110.1 664.3,1089.2 667.6,1065.0 670.9,1054.1 677.5,1023.3 679.7,1017.8 687.4,1010.1 689.2,974.9 692.2,953.0 698.4,945.3 709.4,935.8 733.5,933.6 747.8,935.8 755.5,948.6 758.8,960.6 759.9,974.9 762.1,989.2 764.3,996.5 769.8,996.9 769.1,1306.2 771.2,1307.2 771.2,1616.8 784.7,1617.8 784.7,1635.1" fill="none" stroke="#1cc8d8" stroke-width="2.1" stroke-linejoin="round"/><polyline points="127.19999999999999,658.4 1290.3,658.4 1290.3,1659.7" fill="none" stroke="#dcdcdc" stroke-width="2.4"/><polyline points="151.2,658.4 151.2,1659.7" fill="none" stroke="#dcdcdc" stroke-width="2.4"/><line x1="127.19999999999999" y1="1636.7" x2="1290.3" y2="1636.7" stroke="#dcdcdc" stroke-width="2.4"/><line x1="127.19999999999999" y1="903.0" x2="151.2" y2="903.0" stroke="#dcdcdc" stroke-width="2.2"/><line x1="436.0" y1="1636.7" x2="436.0" y2="1659.7" stroke="#dcdcdc" stroke-width="2.2"/><line x1="127.19999999999999" y1="1147.5" x2="151.2" y2="1147.5" stroke="#dcdcdc" stroke-width="2.2"/><line x1="720.8" y1="1636.7" x2="720.8" y2="1659.7" stroke="#dcdcdc" stroke-width="2.2"/><line x1="127.19999999999999" y1="1392.1" x2="151.2" y2="1392.1" stroke="#dcdcdc" stroke-width="2.2"/><line x1="1005.5" y1="1636.7" x2="1005.5" y2="1659.7" stroke="#dcdcdc" stroke-width="2.2"/></svg><div class="t" style="font-size:19px;line-height:22.8px;top:664.0px;color:#e6e6e6;letter-spacing:2.57px;left:78.8px;-webkit-text-stroke:0.6px #e6e6e6;">2. 905</div><div class="t" style="font-size:19px;line-height:22.8px;top:908.6px;color:#e6e6e6;letter-spacing:2.57px;left:78.8px;-webkit-text-stroke:0.6px #e6e6e6;">1. 613</div><div class="t" style="font-size:19px;line-height:22.8px;top:1153.1px;color:#e6e6e6;letter-spacing:2.57px;left:78.8px;-webkit-text-stroke:0.6px #e6e6e6;">0. 320</div><div class="t" style="font-size:19px;line-height:22.8px;top:1397.7px;color:#e6e6e6;letter-spacing:2.51px;left:62.5px;-webkit-text-stroke:0.6px #e6e6e6;">- 0. 972</div><div class="t" style="font-size:19px;line-height:22.8px;top:1642.3px;color:#e6e6e6;letter-spacing:2.51px;left:62.5px;-webkit-text-stroke:0.6px #e6e6e6;">- 2. 265</div><div class="t" style="font-size:19px;line-height:22.8px;top:1651.1px;color:#e6e6e6;letter-spacing:2.22px;left:155.2px;-webkit-text-stroke:0.6px #e6e6e6;">- 0. 022</div><div class="t" style="font-size:19px;line-height:22.8px;top:1651.1px;color:#e6e6e6;letter-spacing:2.33px;left:440.0px;-webkit-text-stroke:0.6px #e6e6e6;">1. 025</div><div class="t" style="font-size:19px;line-height:22.8px;top:1651.1px;color:#e6e6e6;letter-spacing:2.33px;left:724.8px;-webkit-text-stroke:0.6px #e6e6e6;">2. 071</div><div class="t" style="font-size:19px;line-height:22.8px;top:1651.1px;color:#e6e6e6;letter-spacing:2.62px;left:1009.5px;-webkit-text-stroke:0.6px #e6e6e6;">3. 118</div><div class="t" style="font-size:19px;line-height:22.8px;top:1651.1px;color:#e6e6e6;letter-spacing:2.33px;left:1294.3px;-webkit-text-stroke:0.6px #e6e6e6;">4. 165</div><div class="t" style="font-size:21px;line-height:25.2px;top:628.9px;color:#e6e6e6;letter-spacing:0.00px;left:150.0px;-webkit-text-stroke:0.3px #e6e6e6;transform:scaleX(1.257);transform-origin:left center;">mm</div><div class="t" style="font-size:21px;line-height:25.2px;top:1608.4px;color:#e6e6e6;letter-spacing:0.00px;left:1294.0px;-webkit-text-stroke:0.3px #e6e6e6;transform:scaleX(1.200);transform-origin:left center;">mm</div></div><div style="position:absolute;left:17.1px;top:21px;width:3.2px;height:1723px;background:linear-gradient(90deg,#dcdce0,#a2a2aa 55%,#5c5c62);"></div><div style="position:absolute;left:2314.3px;top:21px;width:6.5px;height:111px;background:linear-gradient(90deg,#6a7a58 0 1px,#a8a8b0 1px,#bcbcc2);"></div><div class="win" style="left:973px;top:131px;height:1724px;"><div style="left:0px;top:0;width:2296px;height:141px;"><div style="left:0.0px;top:0.0px;width:661.0px;height:68.5px;background:linear-gradient(#767676,#858585 12%,#828282);border:2.5px solid #161616;"></div><svg style="left:12.0px;top:8.0px;overflow:visible;" width="42" height="48" viewBox="0 0 42 48"><path d="M6,2 H32 L38,8 V44 H2 V18 L6,14 Z" fill="#2a2a2a"/><path d="M21.8,15.3 V36.6 H17.4 V20.6 L13.6,22.8 V18.8 L18.8,15.3 Z" fill="#fff"/></svg><div class="t" style="font-size:30px;line-height:36.0px;top:14.5px;color:#f6f6f6;letter-spacing:2.05px;left:79.0px;-webkit-text-stroke:0.5px #f6f6f6;">Program  011  AA- R</div><svg style="left:610.0px;top:30.0px;overflow:visible;" width="40" height="22" viewBox="0 0 40 22"><polygon points="2,1 36,1 19,19" fill="#fff"/></svg><div class="lb" style="left:659.0px;top:0.0px;width:96.5px;height:69.0px;border-radius:0 0 7px 0;"></div><div class="t" style="font-size:20px;line-height:24.0px;top:20.0px;color:#1c1c1c;letter-spacing:1.62px;left:672.0px;-webkit-text-stroke:0.6px #1c1c1c;">Zapisz</div><div class="lb" style="left:767.0px;top:0.0px;width:300.0px;height:57.0px;border-radius:0 0 9px 9px;"></div><div style="left:880.5px;top:0.0px;width:2.5px;height:56.0px;background:#333;"></div><div class="t" style="font-size:20px;line-height:24.0px;top:16.5px;color:#1c1c1c;letter-spacing:1.68px;left:778.0px;-webkit-text-stroke:0.6px #1c1c1c;">Edytuj</div><div class="t" style="font-size:20px;line-height:24.0px;top:16.5px;color:#1c1c1c;letter-spacing:1.63px;left:903.5px;-webkit-text-stroke:0.6px #1c1c1c;">Ustawienia</div><svg style="left:846.0px;top:16.0px;overflow:visible;" width="30" height="22" viewBox="0 0 30 22"><polygon points="2.6,2 26,2 14.3,19.4" fill="#222"/></svg><svg style="left:1029.4px;top:16.0px;overflow:visible;" width="30" height="22" viewBox="0 0 30 22"><polygon points="2.6,2 26,2 14.3,19.4" fill="#222"/></svg><div class="t" style="font-size:19px;line-height:22.8px;top:7.6px;color:#1c1c1c;letter-spacing:1.93px;left:1118.0px;-webkit-text-stroke:0.6px #1c1c1c;">Użycie  CPU</div><div class="t" style="font-size:19px;line-height:22.8px;top:7.6px;color:#1c1c1c;letter-spacing:3.75px;left:1326.0px;-webkit-text-stroke:0.6px #1c1c1c;">33. 3  %</div><div class="t" style="font-size:19px;line-height:22.8px;top:48.6px;color:#1c1c1c;letter-spacing:2.36px;left:1111.6px;-webkit-text-stroke:0.6px #1c1c1c;">Czas  progr.</div><div class="t" style="font-size:19px;line-height:22.8px;top:48.6px;color:#1c1c1c;letter-spacing:2.49px;left:1340.5px;-webkit-text-stroke:0.6px #1c1c1c;">2. 6  ms</div><div style="left:1470.0px;top:7.0px;width:4.5px;height:129.0px;background:linear-gradient(90deg,#7e7e7e 60%,#d8d8d8);"></div><div class="lb" style="left:1508.0px;top:12.0px;width:86.0px;height:86.0px;border-radius:7px;border-width:3px;border-color:#2c2c2c;background:linear-gradient(#ffffff,#ececec 45%,#c6c6c6);"></div><svg style="left:1508.0px;top:12.0px;overflow:visible;" width="86" height="86" viewBox="0 0 86 86"><defs><linearGradient id="wb" x1="0" y1="0" x2="0" y2="1"><stop offset="0" stop-color="#1a8cff"/><stop offset="1" stop-color="#0a4ee0"/></linearGradient><linearGradient id="wc" x1="0" y1="0" x2="0" y2="1"><stop offset="0" stop-color="#b6f6fb"/><stop offset="1" stop-color="#4fd6ea"/></linearGradient></defs><rect x="37.5" y="16" width="10.4" height="22" fill="url(#wb)"/><path d="M28.5,43.6 H22 V62.5 H15.6 L25.2,72 L34.5,62.5 H28.5 Z" fill="#9a9a9a"/><path d="M55,41 H65 V61.7 H70.8 L60.9,72 L51,61.7 H55 Z" fill="url(#wb)"/><polygon points="42.8,34 57.4,43.6 42.8,53 28.2,43.6" fill="url(#wc)" stroke="#5a7fae" stroke-width="2"/></svg><div class="t" style="font-size:20px;line-height:24.0px;top:106.5px;color:#1c1c1c;letter-spacing:2.07px;left:1251.0px;width:600px;text-align:center;text-indent:2.07px;-webkit-text-stroke:0.6px #1c1c1c;">Warunki</div><div class="lb" style="left:1654.0px;top:12.0px;width:86.0px;height:86.0px;border-radius:7px;border-width:3px;border-color:#2c2c2c;background:linear-gradient(#ffffff,#ececec 45%,#c6c6c6);"></div><svg style="left:1654.0px;top:12.0px;overflow:visible;" width="86" height="86" viewBox="0 0 86 86"><defs><linearGradient id="sv" x1="0" y1="0" x2="1" y2="0"><stop offset="0" stop-color="#6a6a6e"/><stop offset="0.35" stop-color="#3a3a3e"/><stop offset="1" stop-color="#161618"/></linearGradient><linearGradient id="ab" x1="0" y1="0" x2="0" y2="1"><stop offset="0" stop-color="#2aa0ff"/><stop offset="1" stop-color="#0864ec"/></linearGradient></defs><rect x="46" y="22" width="9" height="45.5" fill="#18181a"/><rect x="23.4" y="18.9" width="24" height="49.4" fill="url(#sv)"/><rect x="31" y="26" width="4.4" height="36" fill="#5a6270" opacity="0.8"/><path d="M41,48.5 H59.6 V37.8 L74.4,53.5 L59.6,69 V59.2 H41 Z" fill="url(#ab)"/></svg><div class="t" style="font-size:20px;line-height:24.0px;top:106.5px;color:#1c1c1c;letter-spacing:1.55px;left:1397.0px;width:600px;text-align:center;text-indent:1.55px;-webkit-text-stroke:0.6px #1c1c1c;">Wyjścia</div><div class="lb" style="left:1800.0px;top:12.0px;width:86.0px;height:86.0px;border-radius:7px;border-width:3px;border-color:#2c2c2c;background:linear-gradient(#ffffff,#ececec 45%,#c6c6c6);"></div><svg style="left:1800.0px;top:12.0px;overflow:visible;" width="86" height="86" viewBox="0 0 86 86"><defs><linearGradient id="mt" x1="0" y1="0" x2="1" y2="0"><stop offset="0" stop-color="#a4aab2"/><stop offset="1" stop-color="#6e747c"/></linearGradient></defs><path d="M19,17 C17,22 18,28 23.5,31 V58 C18,61 17,67 19,73 L23,70 V64 H31 V70 L35,73 C37,67 36,61 31,58 V31 C36,28 37,22 35,17 L31,20 V26 H23 V20 Z" fill="url(#mt)"/><rect x="43.6" y="19.7" width="25.6" height="10" fill="url(#mt)"/><rect x="52.7" y="29" width="8.2" height="21" fill="url(#mt)"/><rect x="49.4" y="48.5" width="14" height="24" rx="1.5" fill="#168cf6"/></svg><div class="t" style="font-size:20px;line-height:24.0px;top:106.5px;color:#1c1c1c;letter-spacing:1.66px;left:1543.0px;width:600px;text-align:center;text-indent:1.66px;-webkit-text-stroke:0.6px #1c1c1c;">Funkcje</div><div style="left:1918.0px;top:6.5px;width:4.5px;height:129.0px;background:linear-gradient(90deg,#7e7e7e 60%,#d8d8d8);"></div><div style="left:1928.0px;top:6.0px;width:186.0px;height:128.5px;background:linear-gradient(#585c67,#3a3d46 40%,#22242a 80%,#1a1b20);border:2px solid #101114;border-radius:10px;"></div><div class="t" style="font-size:20px;line-height:24.0px;top:56.5px;color:#f0f0f0;letter-spacing:1.87px;left:1968.0px;-webkit-text-stroke:0.6px #f0f0f0;">Tryb  Run</div><div style="left:2126.5px;top:0.0px;width:170.0px;height:141.5px;background:#6abe00;"></div><div class="t" style="font-size:20px;line-height:24.0px;top:25.5px;color:#e4f3c8;letter-spacing:1.75px;left:2150.6px;">Całk.  status</div><div class="t" style="font-size:70px;line-height:84.0px;top:40.5px;color:#fff;letter-spacing:0.00px;font-weight:bold;left:2166.7px;transform:scaleX(0.860);transform-origin:left center;">OK</div></div><div style="left:0.0px;top:141.0px;width:2296.0px;height:4.5px;background:linear-gradient(#8a6a3a,#5a3a0c);"></div><div style="left:22.5px;top:82.4px;width:215.5px;height:65.6px;background:linear-gradient(#ffab00,#ffb62a 25%,#ffd58a 55%,#fff3de 78%,#fff);border:2.5px solid #6e4a12;border-bottom:0;border-radius:9px 0 0 0;"></div><div style="left:237.0px;top:82.4px;width:216.5px;height:62.6px;background:linear-gradient(#4a4c56,#50525c 45%,#40434d 50%,#3c3f49);border:2.5px solid #5c3e10;border-radius:0 9px 0 0;"></div><div class="t" style="font-size:22px;line-height:26.4px;top:100.3px;color:#2c1e08;letter-spacing:2.32px;left:42.6px;-webkit-text-stroke:0.6px #2c1e08;">Lista  narzędzi</div><div class="t" style="font-size:22px;line-height:26.4px;top:100.3px;color:#f4f4f4;letter-spacing:2.03px;left:262.0px;-webkit-text-stroke:0.6px #f4f4f4;">Pomiar  wart.</div><div style="left:0.0px;top:145.5px;width:2296.0px;height:15.0px;background:#fdfdfd;"></div><div style="left:24.5px;top:145.5px;width:211.5px;height:4.0px;background:#fff;"></div><div style="left:0.0px;top:160.0px;width:2296.0px;height:10.0px;background:linear-gradient(#d6d9d9,#c4c7c7);"></div><div style="left:0.0px;top:164.0px;width:219.0px;height:284.5px;background:#f0f1f3;"></div><div style="left:218.6px;top:164.0px;width:3.6px;height:284.5px;background:#c5c8c8;"></div><div style="left:222.0px;top:168.0px;width:280.5px;height:280.0px;background:#efefef;border-bottom:4px solid #f9f9f9;"></div><div style="left:502.0px;top:169.0px;width:1794.0px;height:279.0px;background:#f0f1f3;border-left:2px solid #d4d6d6;border-right:2px solid #d4d6d6;"></div><svg style="left:22.0px;top:197.5px;overflow:visible;" width="200" height="176" viewBox="0 0 200 176"><defs><linearGradient id="lg1" x1="0" y1="0" x2="0" y2="1"><stop offset="0" stop-color="#fdfdfd"/><stop offset="0.5" stop-color="#dcdcdc"/><stop offset="1" stop-color="#b4b4b4"/></linearGradient></defs><path d="M10,2 H141 Q148,2 150,9 L172.5,87 L150,165 Q148,172.5 141,172.5 H10 Q2,172.5 2,164 V10 Q2,2 10,2 Z" fill="url(#lg1)" stroke="#222" stroke-width="3"/></svg><svg style="left:22.0px;top:197.5px;overflow:visible;" width="200" height="176" viewBox="0 0 200 176"><defs><linearGradient id="hb" x1="0" y1="0" x2="0" y2="1"><stop offset="0" stop-color="#5e5e5e"/><stop offset="1" stop-color="#2c2c2c"/></linearGradient></defs><polygon points="77.6,85.8 89.3,89.3 75.2,110.5 57.6,104.6" fill="#3e8ef2"/><polygon points="49.4,45.8 103.4,43.5 110.5,49.4 108,54 103.4,54 100,82.3 87,87 65.8,91.7 49.4,85.8" fill="url(#hb)"/><polygon points="49.4,45.8 66,48.5 66,91.5 49.4,85.8" fill="#858585"/><ellipse cx="92" cy="69" rx="6" ry="11" transform="rotate(25 92 69)" fill="#111"/></svg><div class="t" style="font-size:19px;line-height:22.8px;top:322.2px;color:#1c1c1c;letter-spacing:1.80px;left:-192.0px;width:600px;text-align:center;text-indent:1.80px;-webkit-text-stroke:0.6px #1c1c1c;">Ustaw</div><div class="t" style="font-size:19px;line-height:22.8px;top:344.6px;color:#1c1c1c;letter-spacing:2.44px;left:-192.0px;width:600px;text-align:center;text-indent:2.44px;-webkit-text-stroke:0.6px #1c1c1c;">głowica</div><div class="lb" style="left:252.0px;top:198.4px;width:216.5px;height:174.0px;border-radius:9px;border-width:3px;background:linear-gradient(#fdfdfd,#dedede 50%,#b2b2b2);"></div><svg style="left:252.0px;top:198.4px;overflow:visible;" width="216.5" height="174" viewBox="0 0 216.5 174"><defs><linearGradient id="ar" x1="0" y1="0" x2="0" y2="1"><stop offset="0" stop-color="#4a90f0"/><stop offset="1" stop-color="#0a3cae"/></linearGradient></defs><rect x="83.5" y="41.5" width="51.4" height="43.6" fill="none" stroke="url(#ar)" stroke-width="4.4"/><path d="M80,38 L86,44 M138.5,38 L132.5,44 M80,88.5 L86,82.5 M138.5,88.5 L132.5,82.5" stroke="#1a58c8" stroke-width="3.4"/><path d="M122.3,57.6 V91.7 M104,74 H140.4" stroke="#e8194e" stroke-width="8.4"/></svg><div class="t" style="font-size:22px;line-height:26.4px;top:305.1px;color:#1c1c1c;letter-spacing:2.63px;left:59.7px;width:600px;text-align:center;text-indent:2.63px;-webkit-text-stroke:0.6px #1c1c1c;">Dodaj</div><div class="t" style="font-size:22px;line-height:26.4px;top:336.8px;color:#1c1c1c;letter-spacing:2.08px;left:59.7px;width:600px;text-align:center;text-indent:2.08px;-webkit-text-stroke:0.6px #1c1c1c;">narzędzia</div><div style="left:521.0px;top:176.0px;width:226.5px;height:226.5px;background:#ffc148;box-shadow:0 0 0 1px #e8d9b8;"></div><div style="left:538.0px;top:179.6px;width:193.0px;height:153.0px;background:#000;"></div><div style="left:541.0px;top:320.6px;width:187.0px;height:10.5px;background:linear-gradient(#7dff6e,#00f000 35%,#00d800);"></div><svg style="left:538.0px;top:179.6px;overflow:visible;" width="193" height="153" viewBox="0 0 193 153"><line x1="107" y1="2" x2="107" y2="138" stroke="#d8c800" stroke-width="2"/><line x1="97.5" y1="95.6" x2="108.4" y2="67.4" stroke="#12d6e0" stroke-width="3"/></svg><div class="t" style="font-size:37px;line-height:44.4px;top:182.0px;color:#fff;letter-spacing:0.00px;font-weight:bold;left:547.0px;">A</div><div class="t" style="font-size:19px;line-height:22.8px;top:355.6px;color:#1c1c1c;letter-spacing:2.33px;left:525.7px;-webkit-text-stroke:0.6px #1c1c1c;">Promień</div><div style="left:774.5px;top:174.0px;width:230.5px;height:230.5px;background:#f8f8f8;border:3px solid #d2d3d4;box-shadow:1px 1px 2px #bbb;"></div><div style="left:793.5px;top:179.6px;width:193.0px;height:153.0px;background:#000;"></div><div style="left:796.5px;top:320.6px;width:187.0px;height:10.5px;background:linear-gradient(#7dff6e,#00f000 35%,#00d800);"></div><svg style="left:793.5px;top:179.6px;overflow:visible;" width="193" height="153" viewBox="0 0 193 153"><path d="M88,4.5 H84 V137.5 H88 M116.5,4 V138" fill="none" stroke="#d21ad2" stroke-width="2.4"/><rect x="90.5" y="3.5" width="32" height="134" fill="none" stroke="#0a6a14" stroke-width="1.8"/><line x1="98" y1="95.6" x2="108.5" y2="67.4" stroke="#12d6e0" stroke-width="3"/></svg><div class="t" style="font-size:37px;line-height:44.4px;top:182.0px;color:#fff;letter-spacing:0.00px;font-weight:bold;left:802.5px;">A</div><div class="t" style="font-size:19px;line-height:22.8px;top:355.6px;color:#1c1c1c;letter-spacing:2.09px;left:781.2px;-webkit-text-stroke:0.6px #1c1c1c;">Wynik  RJ  A- A</div><div style="left:1030.0px;top:174.0px;width:230.5px;height:230.5px;background:#f8f8f8;border:3px solid #d2d3d4;box-shadow:1px 1px 2px #bbb;"></div><div style="left:1049.0px;top:179.6px;width:193.0px;height:153.0px;background:#000;"></div><div style="left:1052.0px;top:320.6px;width:187.0px;height:10.5px;background:linear-gradient(#7dff6e,#00f000 35%,#00d800);"></div><svg style="left:1049.0px;top:179.6px;overflow:visible;" width="193" height="153" viewBox="0 0 193 153"><line x1="98" y1="95.6" x2="107.8" y2="67.4" stroke="#12d6e0" stroke-width="3"/></svg><div class="t" style="font-size:37px;line-height:44.4px;top:182.0px;color:#fff;letter-spacing:0.00px;font-weight:bold;left:1058.0px;">A</div><div class="t" style="font-size:19px;line-height:22.8px;top:355.6px;color:#1c1c1c;letter-spacing:2.13px;left:1036.7px;-webkit-text-stroke:0.6px #1c1c1c;">Korekcja  R  A- A</div><div style="left:503.0px;top:411.2px;width:1791.0px;height:32.5px;background:#d9d9d9;border:3px solid #909090;"></div><div style="left:503.0px;top:411.2px;width:31.0px;height:32.5px;background:linear-gradient(#f4f4f4,#dadada);border:3px solid #8c8c8c;"></div><div style="left:2263.0px;top:411.2px;width:31.0px;height:32.5px;background:linear-gradient(#f4f4f4,#dadada);border:3px solid #8c8c8c;"></div><svg style="left:503.0px;top:411.6px;overflow:visible;" width="31" height="32" viewBox="0 0 31 32"><polygon points="19,8 19,24 10,16" fill="#555"/></svg><svg style="left:2263.5px;top:411.6px;overflow:visible;" width="31" height="32" viewBox="0 0 31 32"><polygon points="12,8 12,24 21,16" fill="#555"/></svg><div style="left:502.0px;top:443.7px;width:1794.0px;height:4.5px;background:#c9cbcc;"></div><div style="left:0.0px;top:447.6px;width:2296.0px;height:24.0px;background:linear-gradient(#59636f 0 1px,#4c8ac6 1px,#4078b2 5px,#36598b 7.5px,#33547e 21px,#1c2c44);"></div><div style="left:0.0px;top:471.0px;width:1468.0px;height:142.0px;background:#000;"></div><div style="left:0.0px;top:471.0px;width:1468.0px;height:70.0px;background:linear-gradient(#0a0a0a,#2a2a2a 4px,#262626 8px,#060606 12px,#030303 60px,#2c2c2c 65px,#2a2a2a);"></div><div style="left:0.0px;top:541.0px;width:1468.0px;height:72.0px;background:linear-gradient(#262626,#0a0a0a 5px,#080808 60px,#161616 66px,#000 70px);"></div><div style="left:10.0px;top:480.0px;width:249.0px;height:54.0px;background:#050505;border-radius:8px;border-bottom:1px solid #3a3a3a;"></div><div class="db" style="left:12.0px;top:482.0px;width:61.2px;height:50.0px;border-radius:6px 0 0 6px;"></div><svg style="left:20.6px;top:487.0px;overflow:visible;" width="44" height="40" viewBox="0 0 44 40"><rect x="4.4" y="4.6" width="34" height="30.4" fill="#24262f" stroke="#00a8f4" stroke-width="2.3"/><line x1="4.4" y1="9.6" x2="38.4" y2="9.6" stroke="#00a8f4" stroke-width="2"/><text x="21.5" y="31.6" font-family="Liberation Sans" font-size="22.5" text-anchor="middle" fill="#00a8f4" stroke="#00a8f4" stroke-width="0.9">A</text></svg><div class="db" style="left:73.2px;top:482.0px;width:61.2px;height:50.0px;border-radius:0;"></div><svg style="left:81.9px;top:487.0px;overflow:visible;" width="44" height="40" viewBox="0 0 44 40"><rect x="4.4" y="4.6" width="34" height="30.4" fill="#24262f" stroke="#c4c4c4" stroke-width="2.3"/><line x1="4.4" y1="9.6" x2="38.4" y2="9.6" stroke="#c4c4c4" stroke-width="2"/><text x="21.5" y="31.6" font-family="Liberation Sans" font-size="22.5" text-anchor="middle" fill="#c4c4c4" stroke="#c4c4c4" stroke-width="0.9">B</text></svg><div class="db" style="left:134.5px;top:482.0px;width:61.2px;height:50.0px;border-radius:0;"></div><svg style="left:143.1px;top:487.0px;overflow:visible;" width="44" height="40" viewBox="0 0 44 40"><rect x="4.4" y="4.6" width="34" height="30.4" fill="#24262f" stroke="#c4c4c4" stroke-width="2.3"/><line x1="4.4" y1="9.6" x2="38.4" y2="9.6" stroke="#c4c4c4" stroke-width="2"/><line x1="21.4" y1="9.6" x2="21.4" y2="35" stroke="#c4c4c4" stroke-width="2.2"/></svg><div class="db" style="left:195.8px;top:482.0px;width:61.2px;height:50.0px;border-radius:0 6px 6px 0;"></div><svg style="left:204.4px;top:487.0px;overflow:visible;" width="44" height="40" viewBox="0 0 44 40"><rect x="4.4" y="4.6" width="34" height="30.4" fill="#24262f" stroke="#c4c4c4" stroke-width="2.3"/><line x1="4.4" y1="9.6" x2="38.4" y2="9.6" stroke="#c4c4c4" stroke-width="2"/><line x1="4.4" y1="22" x2="38.4" y2="22" stroke="#c4c4c4" stroke-width="2.2"/></svg><div style="left:14.0px;top:529.0px;width:59.0px;height:2.5px;background:#8a8d93;"></div><div style="left:12.5px;top:482.5px;width:61.0px;height:3.0px;background:#2c2f36;"></div><div class="vd" style="left:270.0px;top:478.0px;width:4.0px;height:59.0px;"></div><div style="left:282.8px;top:480.0px;width:124.7px;height:54.0px;background:#050505;border-radius:8px;border-bottom:1px solid #3a3a3a;"></div><div class="db" style="left:284.8px;top:482.0px;width:60.3px;height:50.0px;border-radius:6px 0 0 6px;"></div><svg style="left:293.0px;top:487.0px;overflow:visible;" width="44" height="40" viewBox="0 0 44 40"><rect x="4.5" y="4.6" width="34.5" height="30" fill="#1a1c28" stroke="#c4c4c4" stroke-width="2.4"/><path d="M2,9.4 H38.5 M2,30.2 H38.5" stroke="#e9e100" stroke-width="4" fill="none"/><polygon points="0,5 6,9.4 0,13.8" fill="#e9e100"/><polygon points="0,25.8 6,30.2 0,34.6" fill="#e9e100"/><path d="M5.5,25 H12 C15,25 14,14 19,14 H25 C30,14 29,25 32,25 H38" stroke="#12d2dc" stroke-width="2.8" fill="none"/></svg><div class="db" style="left:345.1px;top:482.0px;width:60.3px;height:50.0px;border-radius:0 6px 6px 0;"></div><svg style="left:353.3px;top:487.0px;overflow:visible;" width="44" height="40" viewBox="0 0 44 40"><rect x="6.3" y="4.6" width="35" height="30" fill="#1a1c28" stroke="#c4c4c4" stroke-width="2.4"/><path d="M6,25 H14 C17,25 16,11.5 24.5,11.5 C33,11.5 32,25 35,25 H41.5" stroke="#12d2dc" stroke-width="2.8" fill="none"/><path d="M14.6,2 V33.8 M34.5,2 V33.8" stroke="#e9e100" stroke-width="3.2" fill="none"/><path d="M8.6,3 H20 M28.8,3 H40" stroke="#e9e100" stroke-width="4" fill="none"/></svg><div style="left:417.0px;top:480.0px;width:63.5px;height:54.0px;background:#050505;border-radius:8px;border-bottom:1px solid #3a3a3a;"></div><div class="dbd" style="left:419.0px;top:482.0px;width:59.5px;height:50.0px;border-radius:6px;"></div><svg style="left:426.8px;top:487.0px;overflow:visible;" width="44" height="40" viewBox="0 0 44 40"><path d="M9,11 V6 H33.5 V11" stroke="#565a63" stroke-width="2.4" fill="none"/><path d="M6.7,15 H17.5 M25.4,15 H36.8" stroke="#6a6812" stroke-width="3.4"/><path d="M12.1,15 V38 M31.1,15 V38" stroke="#6a6812" stroke-width="3"/><path d="M13,27.4 H21 M32,27.4 H40" stroke="#6a6812" stroke-width="2.6"/><polygon points="15,24 19,27.4 15,30.8" fill="#6a6812"/><polygon points="34,24 38,27.4 34,30.8" fill="#6a6812"/></svg><div style="left:488.0px;top:480.0px;width:63.7px;height:54.0px;background:#050505;border-radius:8px;border-bottom:1px solid #3a3a3a;"></div><div class="dbd" style="left:490.0px;top:482.0px;width:59.7px;height:50.0px;border-radius:6px;"></div><svg style="left:497.9px;top:487.0px;overflow:visible;" width="44" height="40" viewBox="0 0 44 40"><rect x="6.5" y="4.6" width="33.5" height="30" fill="none" stroke="#545861" stroke-width="2.4"/><path d="M7.6,3.6 H16.7 M28,3.6 H38.3" stroke="#6a6812" stroke-width="3.4"/><path d="M12.5,3.6 V33.6 M32.9,3.6 V13" stroke="#6a6812" stroke-width="3"/><path d="M25.5,18.5 A8,8 0 1 0 31.5,17.6" stroke="#8c2828" stroke-width="4" fill="none"/><polygon points="23,14 31,16 25,22" fill="#8c2828"/></svg><div class="vd" style="left:561.0px;top:478.0px;width:4.0px;height:59.0px;"></div><div style="left:574.0px;top:480.0px;width:187.7px;height:54.0px;background:#050505;border-radius:8px;border-bottom:1px solid #3a3a3a;"></div><div class="db" style="left:576.0px;top:482.0px;width:61.2px;height:50.0px;border-radius:6px 0 0 6px;"></div><svg style="left:584.6px;top:487.0px;overflow:visible;" width="44" height="40" viewBox="0 0 44 40"><rect x="4" y="5" width="34" height="29.5" fill="#1a1c28" stroke="#c4c4c4" stroke-width="2.4"/><rect x="8" y="9.6" width="25.5" height="21" fill="none" stroke="#e9e100" stroke-width="3"/><path d="M3,25 H12 C15,25 14,15 19,15 C23,15 22,21 25,22" stroke="#12d2dc" stroke-width="2.8" fill="none"/><rect x="23" y="19" width="18" height="18" fill="#30333a"/><line x1="32.9" y1="29.799999999999997" x2="39.7" y2="36.8" stroke="#ececec" stroke-width="3" stroke-linecap="round"/><circle cx="29.7" cy="26.4" r="4.8" fill="#1c1e24" stroke="#ececec" stroke-width="2"/></svg><div class="db" style="left:637.2px;top:482.0px;width:61.2px;height:50.0px;border-radius:0;"></div><svg style="left:645.9px;top:487.0px;overflow:visible;" width="44" height="40" viewBox="0 0 44 40"><rect x="5.4" y="5" width="34" height="29.5" fill="#1a1c28" stroke="#c4c4c4" stroke-width="2.4"/><rect x="18" y="7.4" width="10" height="25.5" fill="none" stroke="#e9e100" stroke-width="3.2"/><path d="M6.7,24 H16.5 M19.5,23 C21,12 24,12 26.5,18" stroke="#12d2dc" stroke-width="2.8" fill="none"/><rect x="25" y="19" width="18" height="18" fill="#30333a"/><line x1="34.5" y1="29.799999999999997" x2="41.3" y2="36.8" stroke="#ececec" stroke-width="3" stroke-linecap="round"/><circle cx="31.3" cy="26.4" r="4.8" fill="#1c1e24" stroke="#ececec" stroke-width="2"/></svg><div class="db" style="left:698.5px;top:482.0px;width:61.2px;height:50.0px;border-radius:0 6px 6px 0;"></div><svg style="left:707.1px;top:487.0px;overflow:visible;" width="44" height="40" viewBox="0 0 44 40"><rect x="7" y="5" width="34.5" height="29.5" fill="#1a1c28" stroke="#c4c4c4" stroke-width="2.4"/><rect x="9.8" y="15" width="29.5" height="10.6" fill="none" stroke="#e9e100" stroke-width="3.2"/><path d="M11,21.6 H17 L19.5,18.4 H26 M21,11.6 H25 M27,17 H32" stroke="#12d2dc" stroke-width="2.6" fill="none"/><rect x="27" y="19.5" width="18" height="18" fill="#30333a"/><line x1="36.800000000000004" y1="29.799999999999997" x2="43.6" y2="36.8" stroke="#ececec" stroke-width="3" stroke-linecap="round"/><circle cx="33.6" cy="26.4" r="4.8" fill="#1c1e24" stroke="#ececec" stroke-width="2"/></svg><div style="left:772.0px;top:480.0px;width:62.0px;height:54.0px;background:#050505;border-radius:8px;border-bottom:1px solid #3a3a3a;"></div><div class="db" style="left:774.0px;top:482.0px;width:58.0px;height:50.0px;border-radius:6px;"></div><svg style="left:781.0px;top:487.0px;overflow:visible;" width="44" height="40" viewBox="0 0 44 40"><path d="M13.5,14 A11,11 0 1 0 23.5,10.6" stroke="#ff1c1c" stroke-width="4.6" fill="none"/><polygon points="14,9.5 24.5,4.5 24,16.5" fill="#ff1c1c"/></svg><div class="vd" style="left:843.5px;top:478.0px;width:4.0px;height:59.0px;"></div><div style="left:857.3px;top:480.0px;width:61.4px;height:54.0px;background:#050505;border-radius:8px;border-bottom:1px solid #3a3a3a;"></div><div class="db" style="left:859.3px;top:482.0px;width:57.4px;height:50.0px;border-radius:6px;"></div><svg style="left:866.0px;top:487.0px;overflow:visible;" width="44" height="40" viewBox="0 0 44 40"><path d="M2.2,2 H24 L30.4,8.6 V38.2 H2.2 Z" fill="#f2f2f2"/><path d="M24,2 V8.6 H30.4 Z" fill="#bdbdbd"/><rect x="6.6" y="8.6" width="19" height="12.6" fill="#2a1216"/><path d="M6,18 H10.5 C12,18 12,11.4 16,11.4 C20,11.4 20,18 21.5,18 H27" stroke="#12d2dc" stroke-width="2.6" fill="none"/><text x="16" y="35" font-family="Liberation Sans" font-weight="bold" font-size="12.5" text-anchor="middle" fill="#4a4a4a" letter-spacing="0.5">CSV</text><polygon points="29,20.6 35.5,12 35.5,16.5 42.6,20.6 35.5,24.7 35.5,29.2" fill="#06d628"/></svg><div class="vd" style="left:929.4px;top:478.0px;width:4.0px;height:59.0px;"></div><div style="left:942.0px;top:480.0px;width:62.0px;height:54.0px;background:#050505;border-radius:8px;border-bottom:1px solid #3a3a3a;"></div><div class="db" style="left:944.0px;top:482.0px;width:58.0px;height:50.0px;border-radius:6px;"></div><svg style="left:951.0px;top:487.0px;overflow:visible;" width="44" height="40" viewBox="0 0 44 40"><rect x="4.2" y="4.6" width="35.4" height="30" fill="#1b1d2a" stroke="#b8b8b8" stroke-width="2.6"/><path d="M13.4,23.6 V32.6 H20.4 V12.2 M28.2,12.2 V32.6 H34.6 V23.6" stroke="#76dc00" stroke-width="3.6" fill="none"/><rect x="22" y="13" width="2.6" height="20" fill="#76dc00"/><path d="M5.4,23.4 H14 M19.4,11.8 H29 M34,23.4 H38.8" stroke="#12d2dc" stroke-width="3" fill="none"/></svg><div class="vd" style="left:1015.0px;top:478.0px;width:4.0px;height:59.0px;"></div><div style="left:1027.5px;top:480.0px;width:62.0px;height:54.0px;background:#050505;border-radius:8px;border-bottom:1px solid #3a3a3a;"></div><div class="db" style="left:1029.5px;top:482.0px;width:58.0px;height:50.0px;border-radius:6px;"></div><svg style="left:1036.5px;top:487.0px;overflow:visible;" width="44" height="40" viewBox="0 0 44 40"><rect x="1.6" y="1.8" width="23.8" height="14.8" fill="#b4b4b4" stroke="#d0d0d0" stroke-width="1.4"/><path d="M9.5,2 V16.4 M17.5,2 V16.4 M2,9.2 H25" stroke="#555" stroke-width="1.6"/><path d="M29,9.2 H36.2 V15" stroke="#f0f0f0" stroke-width="2.8" fill="none"/><polygon points="32,14 40.4,14 36.2,19" fill="#f0f0f0"/><path d="M13.5,30.2 H6.7 V25" stroke="#f0f0f0" stroke-width="2.8" fill="none"/><polygon points="2.5,26 10.9,26 6.7,21" fill="#f0f0f0"/><rect x="17.6" y="22.4" width="24" height="14.6" fill="#3c3f47" stroke="#d4d4d4" stroke-width="2.4"/></svg><div class="vd" style="left:1099.6px;top:478.0px;width:4.0px;height:59.0px;"></div><div style="left:1113.0px;top:480.0px;width:283.0px;height:54.0px;background:#050505;border-radius:8px;border-bottom:1px solid #3a3a3a;"></div><div class="db" style="left:1115.0px;top:482.0px;width:279.0px;height:50.0px;border-radius:6px;"></div><svg style="left:1136.0px;top:487.0px;overflow:visible;" width="44" height="40" viewBox="0 0 44 40"><defs><linearGradient id="rb" x1="0.7" y1="0" x2="0.2" y2="1"><stop offset="0" stop-color="#ff2a10"/><stop offset="0.3" stop-color="#ffd83a"/><stop offset="0.55" stop-color="#38e04a"/><stop offset="0.8" stop-color="#18a8ff"/><stop offset="1" stop-color="#1038e0"/></linearGradient><radialGradient id="rw" cx="0.5" cy="0.45" r="0.4"><stop offset="0" stop-color="#fff" stop-opacity="0.95"/><stop offset="1" stop-color="#fff" stop-opacity="0"/></radialGradient></defs><polygon points="14,3 26,10 13,27 0,18" fill="url(#rb)"/><polygon points="14,3 26,10 13,27 0,18" fill="url(#rw)"/><rect x="15.4" y="15.4" width="24.4" height="20" fill="#1b1d2a" stroke="#b4b4b4" stroke-width="2.4"/><path d="M16.6,29 H20.5 C23,29 22.5,20.5 27.5,20.5 C32.5,20.5 32,29 34.5,29 H38.6" stroke="#12d2dc" stroke-width="2.6" fill="none"/></svg><div class="t" style="font-size:23.5px;line-height:28.2px;top:491.6px;color:#dedede;letter-spacing:1.29px;left:1186.5px;-webkit-text-stroke:0.6px #dedede;">Obserwacja  3D</div><div style="left:13.0px;top:548.5px;width:348.0px;height:51.0px;background:#1b1a1a;border:3px solid #e4e4e4;"></div><div class="t" style="font-size:25px;line-height:30.0px;top:559.0px;color:#f0f0f0;letter-spacing:0.94px;left:27.0px;-webkit-text-stroke:0.9px #f0f0f0;">Aktualne  zdjęcie</div><svg style="left:311.0px;top:568.5px;overflow:visible;" width="36" height="20" viewBox="0 0 36 20"><polygon points="0,0 35,0 17.5,19" fill="#fff"/></svg><div style="left:370.0px;top:548.5px;width:347.4px;height:51.0px;background:#1b1a1a;border:3px solid #e4e4e4;"></div><div class="t" style="font-size:25px;line-height:30.0px;top:559.0px;color:#f0f0f0;letter-spacing:0.96px;left:384.0px;-webkit-text-stroke:0.9px #f0f0f0;">Nieobrobione  2</div><svg style="left:667.4px;top:568.5px;overflow:visible;" width="36" height="20" viewBox="0 0 36 20"><polygon points="0,0 35,0 17.5,19" fill="#fff"/></svg><div style="left:728.0px;top:547.0px;width:59.0px;height:54.0px;background:#050505;border-radius:8px;border-bottom:1px solid #3a3a3a;"></div><div class="db" style="left:730.0px;top:549.0px;width:55.0px;height:50.0px;border-radius:6px;"></div><svg style="left:735.5px;top:554.0px;overflow:visible;" width="44" height="40" viewBox="0 0 44 40"><rect x="7" y="7" width="22" height="19" fill="none" stroke="#d2d2d2" stroke-width="2.2"/><rect x="18" y="15.6" width="22" height="19" fill="#30333a" stroke="#d2d2d2" stroke-width="2.2"/><path d="M4,7 H10 M7,4 V10 M26,7 H32 M29,4 V10 M4,26 H10 M7,23 V29 M15,15.6 H21 M37,15.6 H43 M40,12.6 V18.6 M15,34.6 H21 M18,31.6 V37.6 M37,34.6 H43 M40,31.6 V37.6" stroke="#d2d2d2" stroke-width="1.8"/></svg><div class="vd" style="left:799.6px;top:545.0px;width:4.0px;height:59.0px;"></div><div style="left:812.0px;top:547.0px;width:376.0px;height:54.0px;background:#050505;border-radius:8px;border-bottom:1px solid #3a3a3a;"></div><div class="db" style="left:814.0px;top:549.0px;width:62.0px;height:50.0px;border-radius:6px 0 0 6px;"></div><svg style="left:823.0px;top:554.0px;overflow:visible;" width="44" height="40" viewBox="0 0 44 40"><line x1="21.2" y1="22.7" x2="37" y2="35" stroke="#d2d2d2" stroke-width="4.6" stroke-linecap="round"/><circle cx="14.5" cy="16" r="9.6" fill="#2b2e35" stroke="#d2d2d2" stroke-width="2.6"/><line x1="9.9" y1="16" x2="19.1" y2="16" stroke="#d2d2d2" stroke-width="3"/><line x1="14.5" y1="11.4" x2="14.5" y2="20.6" stroke="#d2d2d2" stroke-width="3"/></svg><div class="db" style="left:876.0px;top:549.0px;width:62.0px;height:50.0px;border-radius:0;"></div><svg style="left:885.0px;top:554.0px;overflow:visible;" width="44" height="40" viewBox="0 0 44 40"><line x1="21.2" y1="22.7" x2="37" y2="35" stroke="#d2d2d2" stroke-width="4.6" stroke-linecap="round"/><circle cx="14.5" cy="16" r="9.6" fill="#2b2e35" stroke="#d2d2d2" stroke-width="2.6"/><line x1="9.9" y1="16" x2="19.1" y2="16" stroke="#d2d2d2" stroke-width="3"/></svg><div class="db" style="left:938.0px;top:549.0px;width:62.0px;height:50.0px;border-radius:0;"></div><svg style="left:947.0px;top:554.0px;overflow:visible;" width="44" height="40" viewBox="0 0 44 40"><line x1="18.2" y1="22.2" x2="31" y2="34" stroke="#d2d2d2" stroke-width="4.6" stroke-linecap="round"/><circle cx="12" cy="16" r="8.8" fill="#2b2e35" stroke="#d2d2d2" stroke-width="2.6"/><line x1="7.4" y1="16" x2="16.6" y2="16" stroke="#d2d2d2" stroke-width="3"/><line x1="12" y1="11.4" x2="12" y2="20.6" stroke="#d2d2d2" stroke-width="3"/><line x1="37" y1="8" x2="37" y2="30" stroke="#d2d2d2" stroke-width="2.6"/><polygon points="37,31.5 32.8,25.8 41.2,25.8" fill="#d2d2d2"/><polygon points="37,6.5 32.8,12.2 41.2,12.2" fill="#d2d2d2"/></svg><div class="db" style="left:1000.0px;top:549.0px;width:62.0px;height:50.0px;border-radius:0;"></div><svg style="left:1009.0px;top:554.0px;overflow:visible;" width="44" height="40" viewBox="0 0 44 40"><line x1="18.2" y1="22.2" x2="31" y2="34" stroke="#d2d2d2" stroke-width="4.6" stroke-linecap="round"/><circle cx="12" cy="16" r="8.8" fill="#2b2e35" stroke="#d2d2d2" stroke-width="2.6"/><line x1="7.4" y1="16" x2="16.6" y2="16" stroke="#d2d2d2" stroke-width="3"/><line x1="37" y1="5" x2="37" y2="15" stroke="#d2d2d2" stroke-width="2.6"/><polygon points="37,16.5 32.8,10.8 41.2,10.8" fill="#d2d2d2"/><line x1="37" y1="33" x2="37" y2="23" stroke="#d2d2d2" stroke-width="2.6"/><polygon points="37,21.5 32.8,27.2 41.2,27.2" fill="#d2d2d2"/></svg><div class="db" style="left:1062.0px;top:549.0px;width:62.0px;height:50.0px;border-radius:0;"></div><svg style="left:1071.0px;top:554.0px;overflow:visible;" width="44" height="40" viewBox="0 0 44 40"><line x1="23.2" y1="19.6" x2="29" y2="30" stroke="#d2d2d2" stroke-width="4.6" stroke-linecap="round"/><circle cx="17" cy="13.4" r="8.8" fill="#2b2e35" stroke="#d2d2d2" stroke-width="2.6"/><line x1="12.4" y1="13.4" x2="21.6" y2="13.4" stroke="#d2d2d2" stroke-width="3"/><line x1="17" y1="8.8" x2="17" y2="18.0" stroke="#d2d2d2" stroke-width="3"/><line x1="14" y1="34" x2="4" y2="34" stroke="#d2d2d2" stroke-width="2.6"/><polygon points="2.5,34 8.2,29.8 8.2,38.2" fill="#d2d2d2"/><line x1="31" y1="34" x2="42" y2="34" stroke="#d2d2d2" stroke-width="2.6"/><polygon points="43.5,34 37.8,29.8 37.8,38.2" fill="#d2d2d2"/></svg><div class="db" style="left:1124.0px;top:549.0px;width:62.0px;height:50.0px;border-radius:0 6px 6px 0;"></div><svg style="left:1133.0px;top:554.0px;overflow:visible;" width="44" height="40" viewBox="0 0 44 40"><line x1="23.2" y1="19.6" x2="29" y2="30" stroke="#d2d2d2" stroke-width="4.6" stroke-linecap="round"/><circle cx="17" cy="13.4" r="8.8" fill="#2b2e35" stroke="#d2d2d2" stroke-width="2.6"/><line x1="12.4" y1="13.4" x2="21.6" y2="13.4" stroke="#d2d2d2" stroke-width="3"/><line x1="3" y1="34" x2="14" y2="34" stroke="#d2d2d2" stroke-width="2.6"/><polygon points="15.5,34 9.8,29.8 9.8,38.2" fill="#d2d2d2"/><line x1="43" y1="34" x2="32" y2="34" stroke="#d2d2d2" stroke-width="2.6"/><polygon points="30.5,34 36.2,29.8 36.2,38.2" fill="#d2d2d2"/></svg><div style="left:1200.0px;top:547.0px;width:61.0px;height:54.0px;background:#050505;border-radius:8px;border-bottom:1px solid #3a3a3a;"></div><div class="db" style="left:1202.0px;top:549.0px;width:57.0px;height:50.0px;border-radius:6px;"></div><svg style="left:1208.5px;top:554.0px;overflow:visible;" width="44" height="40" viewBox="0 0 44 40"><line x1="7.3" y1="6" x2="7.3" y2="24" stroke="#d2d2d2" stroke-width="2.6"/><polygon points="7.3,25.5 3.0999999999999996,19.8 11.5,19.8" fill="#d2d2d2"/><polygon points="7.3,4.5 3.0999999999999996,10.2 11.5,10.2" fill="#d2d2d2"/><rect x="16.5" y="4.6" width="24.5" height="19.4" fill="#2a2230" stroke="#b8b8b8" stroke-width="2"/><path d="M17.6,18.6 H21.5 C24,18.6 23.5,9.6 28.7,9.6 C34,9.6 33.5,18.6 36,18.6 H40" stroke="#12d2dc" stroke-width="2.6" fill="none"/><line x1="17" y1="33.8" x2="40.5" y2="33.8" stroke="#d2d2d2" stroke-width="2.6"/><polygon points="42.0,33.8 36.3,29.599999999999998 36.3,38.0" fill="#d2d2d2"/><polygon points="15.5,33.8 21.2,29.599999999999998 21.2,38.0" fill="#d2d2d2"/></svg><div style="left:0.0px;top:613.0px;width:1468.0px;height:1111.0px;background:#000;"></div><div style="left:4.5px;top:609.8px;width:1434.0px;height:1078.6px;border:3px solid #ffcc00;box-shadow:0 0 0 1px #b98c00,inset 0 0 0 1px #b98c00;"></div><div style="left:3.5px;top:609.0px;width:99.0px;height:36.5px;background:#3b5583;"></div><div class="t" style="font-size:19px;line-height:22.8px;top:616.1px;color:#f0f0f0;letter-spacing:2.33px;left:13.6px;-webkit-text-stroke:0.4px #f0f0f0;">Głow. A</div><svg style="left:0.0px;top:0.0px;overflow:visible;" width="1468" height="1724" viewBox="0 0 1468 1724"><line x1="436.0" y1="658.4" x2="436.0" y2="1636.7" stroke="#2f2f29" stroke-width="2"/><line x1="151.2" y1="903.0" x2="1290.3" y2="903.0" stroke="#2f2f29" stroke-width="2"/><line x1="720.8" y1="658.4" x2="720.8" y2="1636.7" stroke="#2f2f29" stroke-width="2"/><line x1="151.2" y1="1147.5" x2="1290.3" y2="1147.5" stroke="#2f2f29" stroke-width="2"/><line x1="1005.5" y1="658.4" x2="1005.5" y2="1636.7" stroke="#2f2f29" stroke-width="2"/><line x1="151.2" y1="1392.1" x2="1290.3" y2="1392.1" stroke="#2f2f29" stroke-width="2"/><polyline points="527.9,1636.5 529.3,1612.0 531.4,1591.0 533.9,1570.0 537.4,1545.4 540.9,1517.4 544.4,1489.4 549.6,1468.4 554.9,1450.8 567.2,1429.8 575.9,1410.5 583.6,1406.0 584.7,1391.3 586.4,1363.2 588.2,1328.2 589.9,1300.2 592.4,1277.4 603.9,1251.1 607.4,1230.1 612.7,1202.1 618.0,1177.5 633.7,1156.5 640.7,1139.0 642.8,1127.7 643.6,1097.7 644.9,1096.8 645.4,1065.1 647.2,1064.2 647.7,1036.0 650.7,1019.2 651.6,1009.5 654.2,1000.7 656.0,991.0 660.4,984.8 674.5,969.0 685.1,957.5 699.2,951.3 713.3,948.7 729.2,945.1 762.7,945.1 776.8,948.7 792.6,950.4 799.7,951.3 806.7,955.7 813.8,963.7 819.1,974.2 825.3,990.1 827.9,1000.7 829.7,1014.8 833.2,1025.4 835.0,1040.4 837.6,1060.6 839.4,1078.3 841.1,1098.6 842.0,1108.3 849.1,1112.7 857.9,1114.4 863.2,1115.3 862.2,1139.0 862.2,1377.3 864.3,1377.3 864.3,1636.5" fill="none" stroke="#1cbccc" stroke-width="2.1" stroke-linejoin="round"/><rect x="686.5" y="659.4" width="137" height="975.8000000000001" fill="none" stroke="#f4ec00" stroke-width="4.6"/><ellipse cx="745" cy="1008.8" rx="88.8" ry="60.6" fill="none" stroke="#00d200" stroke-width="2.1"/><rect x="737.6" y="999.8" width="16.2" height="16.8" fill="#00ff00"/><polyline points="127.19999999999999,658.4 1290.3,658.4 1290.3,1659.7" fill="none" stroke="#dcdcdc" stroke-width="2.4"/><polyline points="151.2,658.4 151.2,1659.7" fill="none" stroke="#dcdcdc" stroke-width="2.4"/><line x1="127.19999999999999" y1="1636.7" x2="1290.3" y2="1636.7" stroke="#dcdcdc" stroke-width="2.4"/><line x1="127.19999999999999" y1="903.0" x2="151.2" y2="903.0" stroke="#dcdcdc" stroke-width="2.2"/><line x1="436.0" y1="1636.7" x2="436.0" y2="1659.7" stroke="#dcdcdc" stroke-width="2.2"/><line x1="127.19999999999999" y1="1147.5" x2="151.2" y2="1147.5" stroke="#dcdcdc" stroke-width="2.2"/><line x1="720.8" y1="1636.7" x2="720.8" y2="1659.7" stroke="#dcdcdc" stroke-width="2.2"/><line x1="127.19999999999999" y1="1392.1" x2="151.2" y2="1392.1" stroke="#dcdcdc" stroke-width="2.2"/><line x1="1005.5" y1="1636.7" x2="1005.5" y2="1659.7" stroke="#dcdcdc" stroke-width="2.2"/></svg><div class="t" style="font-size:25px;line-height:30.0px;top:953.0px;color:#00a800;letter-spacing:3.81px;left:676.0px;-webkit-text-stroke:0.6px #00a800;">0. 119mm</div><div class="t" style="font-size:19px;line-height:22.8px;top:664.0px;color:#e6e6e6;letter-spacing:2.57px;left:78.8px;-webkit-text-stroke:0.6px #e6e6e6;">2. 160</div><div class="t" style="font-size:19px;line-height:22.8px;top:908.6px;color:#e6e6e6;letter-spacing:2.57px;left:78.8px;-webkit-text-stroke:0.6px #e6e6e6;">1. 686</div><div class="t" style="font-size:19px;line-height:22.8px;top:1153.1px;color:#e6e6e6;letter-spacing:2.57px;left:78.8px;-webkit-text-stroke:0.6px #e6e6e6;">1. 213</div><div class="t" style="font-size:19px;line-height:22.8px;top:1397.7px;color:#e6e6e6;letter-spacing:2.57px;left:78.8px;-webkit-text-stroke:0.6px #e6e6e6;">0. 739</div><div class="t" style="font-size:19px;line-height:22.8px;top:1642.3px;color:#e6e6e6;letter-spacing:2.57px;left:78.8px;-webkit-text-stroke:0.6px #e6e6e6;">0. 265</div><div class="t" style="font-size:19px;line-height:22.8px;top:1651.1px;color:#e6e6e6;letter-spacing:2.22px;left:155.2px;-webkit-text-stroke:0.6px #e6e6e6;">- 0. 272</div><div class="t" style="font-size:19px;line-height:22.8px;top:1651.1px;color:#e6e6e6;letter-spacing:2.62px;left:440.0px;-webkit-text-stroke:0.6px #e6e6e6;">0. 113</div><div class="t" style="font-size:19px;line-height:22.8px;top:1651.1px;color:#e6e6e6;letter-spacing:2.33px;left:724.8px;-webkit-text-stroke:0.6px #e6e6e6;">0. 498</div><div class="t" style="font-size:19px;line-height:22.8px;top:1651.1px;color:#e6e6e6;letter-spacing:2.33px;left:1009.5px;-webkit-text-stroke:0.6px #e6e6e6;">0. 882</div><div class="t" style="font-size:19px;line-height:22.8px;top:1651.1px;color:#e6e6e6;letter-spacing:2.33px;left:1294.3px;-webkit-text-stroke:0.6px #e6e6e6;">1. 267</div><div class="t" style="font-size:21px;line-height:25.2px;top:628.9px;color:#e6e6e6;letter-spacing:0.00px;left:150.0px;-webkit-text-stroke:0.3px #e6e6e6;transform:scaleX(1.257);transform-origin:left center;">mm</div><div class="t" style="font-size:21px;line-height:25.2px;top:1608.4px;color:#e6e6e6;letter-spacing:0.00px;left:1294.0px;-webkit-text-stroke:0.3px #e6e6e6;transform:scaleX(1.200);transform-origin:left center;">mm</div><div style="left:1468.0px;top:471.0px;width:828.0px;height:1253.0px;background:#0a0e16;"></div><div style="left:1473.5px;top:471.0px;width:818.5px;height:194.0px;background:linear-gradient(#121827 0,#1a2e4e 5px,#21406a 13px,#22416b);"></div><div class="t" style="font-size:29px;line-height:34.8px;top:509.3px;color:#e4ebf3;letter-spacing:1.16px;left:1526.7px;-webkit-text-stroke:0.7px #e4ebf3;">T100</div><div class="t" style="font-size:30px;line-height:36.0px;top:512.0px;color:#f2f5f8;letter-spacing:1.33px;left:1653.0px;-webkit-text-stroke:0.7px #f2f5f8;">Promień</div><div class="t" style="font-size:25px;line-height:30.0px;top:576.0px;color:#f2f5f8;letter-spacing:0.37px;left:1673.7px;-webkit-text-stroke:0.6px #f2f5f8;">Promień</div><div style="left:1491.0px;top:549.5px;width:143.0px;height:98.5px;border:3px solid #dedede;background:linear-gradient(#242424,#4a4a4a 60%,#5e5e5e);"></div><svg style="left:1491.0px;top:549.5px;overflow:visible;" width="143" height="98.5" viewBox="0 0 143 98.5"><path d="M31.5,80 V47 C31.5,30 42,23 58,23 H119" stroke="#00f2f2" stroke-width="4.4" fill="none"/><circle cx="56" cy="47.5" r="24.5" fill="none" stroke="#f4f4f4" stroke-width="3" stroke-dasharray="3.4 4.3"/><line x1="38.5" y1="30" x2="56" y2="47.5" stroke="#00e400" stroke-width="4.2"/></svg><div style="left:1652.0px;top:623.5px;width:608.7px;height:3.0px;background:#c9d2de;"></div><div class="t" style="font-size:25px;line-height:30.0px;top:628.5px;color:#f2f5f8;letter-spacing:3.53px;left:2168.0px;-webkit-text-stroke:0.6px #f2f5f8;">0. 1ms</div><div style="left:1473.5px;top:665.0px;width:818.5px;height:11.6px;background:linear-gradient(#00f400 0 1px,#00ff00 1px 80%,#7aff7a 80%);"></div><div style="left:1473.5px;top:676.6px;width:818.5px;height:3.0px;background:linear-gradient(#3a3a3a,#6a6a6a);"></div><div style="left:1473.5px;top:679.4px;width:818.5px;height:802.0px;background:#eaedef;"></div><div class="t" style="font-size:24px;line-height:28.8px;top:694.6px;color:#1a1a1a;letter-spacing:1.33px;left:1650.0px;-webkit-text-stroke:0.6px #1a1a1a;">Zmierz.</div><div class="t" style="font-size:24px;line-height:28.8px;top:694.6px;color:#1a1a1a;letter-spacing:1.74px;left:1840.6px;-webkit-text-stroke:0.6px #1a1a1a;">Dolny  Lim.</div><div class="t" style="font-size:24px;line-height:28.8px;top:694.6px;color:#1a1a1a;letter-spacing:1.90px;left:2071.0px;-webkit-text-stroke:0.6px #1a1a1a;">Górny  Lim.</div><div style="left:1500.6px;top:733.7px;width:771.0px;height:331.5px;background:#fcfcfc;border:2px solid #4c4c4c;"></div><div style="left:1502.6px;top:735.7px;width:736.4px;height:108.0px;background:#ffc149;"></div><div style="left:1502.6px;top:843.7px;width:736.4px;height:110.5px;background:#eaedef;border-bottom:2px solid #c4c6c8;"></div><div class="t" style="font-size:23px;line-height:27.6px;top:749.2px;color:#1a1a1a;letter-spacing:1.79px;left:1518.0px;-webkit-text-stroke:0.6px #1a1a1a;">Prom.</div><div class="t" style="font-size:23px;line-height:27.6px;top:802.0px;color:#1a1a1a;letter-spacing:2.83px;left:1672.6px;-webkit-text-stroke:0.6px #1a1a1a;">0. 119</div><div class="t" style="font-size:23px;line-height:27.6px;top:802.7px;color:#1a1a1a;letter-spacing:8.25px;left:1813.5px;-webkit-text-stroke:0.6px #1a1a1a;">------.----</div><div class="t" style="font-size:23px;line-height:27.6px;top:802.7px;color:#1a1a1a;letter-spacing:8.36px;left:2048.0px;-webkit-text-stroke:0.6px #1a1a1a;">------.----</div><div class="t" style="font-size:23px;line-height:27.6px;top:859.6px;color:#1a1a1a;letter-spacing:1.68px;left:1518.0px;-webkit-text-stroke:0.6px #1a1a1a;">Środek  X</div><div class="t" style="font-size:23px;line-height:27.6px;top:912.4px;color:#1a1a1a;letter-spacing:2.49px;left:1672.6px;-webkit-text-stroke:0.6px #1a1a1a;">0. 532</div><div class="t" style="font-size:23px;line-height:27.6px;top:913.1px;color:#1a1a1a;letter-spacing:8.25px;left:1813.5px;-webkit-text-stroke:0.6px #1a1a1a;">------.----</div><div class="t" style="font-size:23px;line-height:27.6px;top:913.1px;color:#1a1a1a;letter-spacing:8.36px;left:2048.0px;-webkit-text-stroke:0.6px #1a1a1a;">------.----</div><div class="t" style="font-size:23px;line-height:27.6px;top:970.0px;color:#1a1a1a;letter-spacing:1.84px;left:1518.0px;-webkit-text-stroke:0.6px #1a1a1a;">Środek  Z</div><div class="t" style="font-size:23px;line-height:27.6px;top:1022.8px;color:#1a1a1a;letter-spacing:2.49px;left:1672.6px;-webkit-text-stroke:0.6px #1a1a1a;">1. 488</div><div class="t" style="font-size:23px;line-height:27.6px;top:1023.5px;color:#1a1a1a;letter-spacing:8.25px;left:1813.5px;-webkit-text-stroke:0.6px #1a1a1a;">------.----</div><div class="t" style="font-size:23px;line-height:27.6px;top:1023.5px;color:#1a1a1a;letter-spacing:8.36px;left:2048.0px;-webkit-text-stroke:0.6px #1a1a1a;">------.----</div><div style="left:2239.0px;top:735.7px;width:30.6px;height:327.5px;background:#cfcfcf;border-left:2px solid #8e8e8e;"></div><div style="left:2241.0px;top:737.0px;width:28.0px;height:27.0px;background:linear-gradient(#f4f4f4,#d4d4d4);border:2px solid #9a9a9a;"></div><div style="left:2241.0px;top:1036.0px;width:28.0px;height:27.0px;background:linear-gradient(#f4f4f4,#d4d4d4);border:2px solid #9a9a9a;"></div><svg style="left:2241.0px;top:737.0px;overflow:visible;" width="28" height="27" viewBox="0 0 28 27"><polygon points="7,17 21,17 14,9" fill="#555"/></svg><svg style="left:2241.0px;top:1036.0px;overflow:visible;" width="28" height="27" viewBox="0 0 28 27"><polygon points="7,10 21,10 14,18" fill="#555"/></svg><div class="t" style="font-size:25px;line-height:30.0px;top:1429.7px;color:#1a1a1a;letter-spacing:0.00px;left:1560.0px;-webkit-text-stroke:0.6px #1a1a1a;transform:scaleX(1.254);transform-origin:left center;">1/1</div><div class="lb" style="left:1686.4px;top:1415.5px;width:149.6px;height:53.5px;border-radius:9px;"></div><div style="left:1760.0px;top:1417.0px;width:2.5px;height:50.0px;background:#333;"></div><svg style="left:1686.4px;top:1415.5px;overflow:visible;" width="150" height="54" viewBox="0 0 150 54"><polygon points="48,17 48,37 29,27" fill="#222"/><polygon points="103,17 103,37 122,27" fill="#222"/></svg><div style="left:1473.5px;top:1481.0px;width:818.5px;height:121.5px;background:#d9d9d9;border-top:2px solid #a9a9a9;"></div><div style="left:2072.3px;top:1510.0px;width:183.2px;height:62.5px;background:linear-gradient(#50535b,#2c2e34 55%,#1c1d21);border:2px solid #111;border-radius:7px;"></div><div class="t" style="font-size:24px;line-height:28.8px;top:1526.3px;color:#f0f0f0;letter-spacing:1.46px;left:1863.9px;width:600px;text-align:center;text-indent:1.46px;-webkit-text-stroke:0.6px #f0f0f0;">Edytuj</div><div style="left:1468.0px;top:1602.5px;width:828.0px;height:121.5px;background:#000;"></div><div style="left:1509.0px;top:1624.4px;width:84.0px;height:74.5px;background:linear-gradient(#54575f,#3a3c43 50%,#28292e);border:1px solid #5c5f66;border-radius:3px;"></div><div style="left:1616.7px;top:1624.4px;width:84.5px;height:74.5px;background:linear-gradient(#54575f,#3a3c43 50%,#28292e);border:1px solid #5c5f66;border-radius:3px;"></div><div style="left:1724.4px;top:1624.4px;width:212.0px;height:74.5px;background:linear-gradient(#54575f,#3a3c43 50%,#28292e);border:1px solid #5c5f66;border-radius:3px;"></div><svg style="left:1509.0px;top:1624.4px;overflow:visible;" width="84" height="74.5" viewBox="0 0 84 74.5"><rect x="19" y="27.4" width="44" height="22" fill="#e8e8e8"/><rect x="22" y="32.4" width="11" height="12" fill="#3a3c43"/><rect x="35.5" y="32.4" width="11" height="12" fill="#3a3c43"/><rect x="49" y="32.4" width="11" height="12" fill="#3a3c43"/><path d="M20,29.8 H62 M20,47 H62" stroke="#3a3c43" stroke-width="1.6" stroke-dasharray="2.2 2.2"/></svg><svg style="left:1616.7px;top:1624.4px;overflow:visible;" width="84" height="74.5" viewBox="0 0 84 74.5"><rect x="19.6" y="21.8" width="43.6" height="13.4" rx="4" fill="#ececec"/><rect x="19.6" y="41.8" width="43.6" height="14" rx="4" fill="#ececec"/><text x="41.4" y="33" font-family="Liberation Sans" font-weight="bold" font-size="12" text-anchor="middle" fill="#3a3c43" letter-spacing="1">TIM</text><text x="41.4" y="53.4" font-family="Liberation Sans" font-weight="bold" font-size="12" text-anchor="middle" fill="#3a3c43" letter-spacing="0.4">ZERO</text></svg><svg style="left:1724.4px;top:1624.4px;overflow:visible;" width="84" height="74.5" viewBox="0 0 84 74.5"><rect x="12.4" y="27.4" width="22" height="17" fill="#3a3c43" stroke="#e8e8e8" stroke-width="2.6"/><rect x="24" y="37" width="22" height="17" fill="#3a3c43" stroke="#e8e8e8" stroke-width="2.6"/><path d="M14,40 H19 C21,40 21,32 23.4,32 C26,32 26,40 28,40 H32" stroke="#e8e8e8" stroke-width="2" fill="none"/><path d="M30,42 L39,50 M39,44 V50 H33" stroke="#e8e8e8" stroke-width="2.2" fill="none"/></svg><div class="t" style="font-size:21px;line-height:25.2px;top:1634.9px;color:#e2e2e2;letter-spacing:2.48px;left:1782.4px;-webkit-text-stroke:0.6px #e2e2e2;">Zarejestruj</div><div class="t" style="font-size:21px;line-height:25.2px;top:1665.4px;color:#e2e2e2;letter-spacing:3.41px;left:1782.4px;-webkit-text-stroke:0.6px #e2e2e2;">gł.</div><div style="left:2054.9px;top:1614.8px;width:229.0px;height:98.5px;background:linear-gradient(#2d6cb4,#1d4f8e 50%,#113463);border-bottom:2px solid #2a74c8;"></div><svg style="left:2054.9px;top:1614.8px;overflow:visible;" width="229" height="98.5" viewBox="0 0 229 98.5"><polygon points="32.7,21.8 32.7,65.4 69.7,43.6" fill="#12a4ff"/><circle cx="71.5" cy="63" r="15.5" fill="#1b4b8a"/><path d="M61.5,60.5 A10.5,10.5 0 0 1 80,57 M81.5,65.5 A10.5,10.5 0 0 1 63,69" stroke="#12a4ff" stroke-width="4.6" fill="none"/><polygon points="75.5,54.5 85.5,52.5 83,62.5" fill="#12a4ff"/><polygon points="67.5,71.5 57.5,73.5 60,63.5" fill="#12a4ff"/></svg><div class="t" style="font-size:21px;line-height:25.2px;top:1650.1px;color:#22a8ff;letter-spacing:2.62px;left:2150.8px;-webkit-text-stroke:0.6px #22a8ff;">Wyzwal.</div></div><div style="position:absolute;left:966.7px;top:130.5px;width:6.3px;height:1725px;background:linear-gradient(90deg,#dde1e7 0 2.2px,#a4abb5 2.2px,#878f9a);"></div><div style="position:absolute;left:968.9px;top:130.5px;width:4.1px;height:146px;background:#c4c4c4;"></div>
</body></html>
